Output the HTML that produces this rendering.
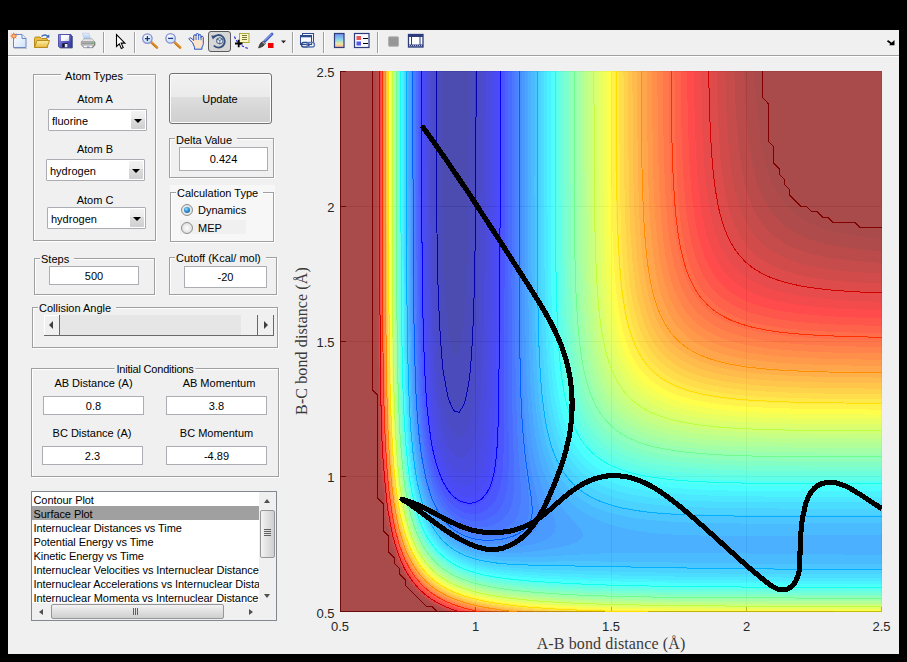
<!DOCTYPE html>
<html><head><meta charset="utf-8"><title>LEPS GUI</title>
<style>
html,body{margin:0;padding:0;background:#000;}
body{width:907px;height:662px;position:relative;overflow:hidden;font:11px "Liberation Sans",Arial,sans-serif;color:#000;}
#win{position:absolute;left:8px;top:30px;width:891px;height:624px;background:#f0f0f0;}
#tbline{position:absolute;left:8px;top:55px;width:891px;height:1px;background:#a0a0a0;}
#tbline2{position:absolute;left:8px;top:56px;width:891px;height:1px;background:#fff;}
.pn{position:absolute;box-sizing:border-box;border:1px solid #a0a0a0;box-shadow:1px 1px 0 0 #fff, inset 1px 1px 0 0 #fff;}
.t{position:absolute;white-space:nowrap;line-height:13px;height:13px;}
.tt{background:#f0f0f0;padding:0 2px;}
.c{transform:translateX(-50%);}
.ed{position:absolute;box-sizing:border-box;background:#fff;border:1px solid #abadb3;text-align:center;white-space:nowrap;}
.ed span{position:absolute;left:0;right:0;text-align:center;line-height:13px;}
.dd{position:absolute;box-sizing:border-box;background:#fff;border:1px solid #abadb3;border-radius:1px;}
.dd .v{position:absolute;left:3px;top:5px;line-height:13px;}
.dd .b{position:absolute;right:1px;top:1px;bottom:1px;width:14px;border-radius:1px;background:linear-gradient(#f2f2f2 0%,#ebebeb 44%,#dddddd 45%,#cfcfcf 100%);}
.dd .b:after{content:"";position:absolute;left:3.2px;top:8px;border:4.2px solid transparent;border-top:4.6px solid #000;border-bottom:none;}
.rd{position:absolute;width:12px;height:12px;border-radius:50%;box-sizing:border-box;border:1px solid #8e8f8f;background:radial-gradient(circle at 50% 50%,#fdfdfd 0,#ececec 45%,#cfcfcf 100%);}
.rd.on:after{content:"";position:absolute;left:2px;top:2px;width:6px;height:6px;border-radius:50%;background:radial-gradient(circle at 40% 35%,#9fe4ff 0,#2a8fd0 45%,#0c4f8c 100%);}
.sep{position:absolute;top:35px;width:1px;height:17px;background:#a0a0a0;box-shadow:1px 0 0 #fff;}
.tk{position:absolute;white-space:nowrap;line-height:15px;color:#262626;font-size:13px;}
.tk.r{right:572.5px;}
.lb{position:absolute;white-space:nowrap;font:16px "Liberation Serif","DejaVu Serif",serif;color:#3a3a3a;line-height:18px;letter-spacing:0.12px;}
.li{position:absolute;left:1px;width:227px;height:14px;line-height:14px;white-space:nowrap;overflow:hidden;padding-left:1px;box-sizing:border-box;letter-spacing:-0.07px;text-indent:-0.5px;}
</style></head><body>
<div id="win"></div>
<div id="tbline"></div><div id="tbline2"></div>
<svg id="tb" width="907" height="57" viewBox="0 0 907 57" style="position:absolute;left:0;top:0">
<defs>
<linearGradient id="gpage" x1="0" y1="0" x2="1" y2="1"><stop offset="0" stop-color="#fff"/><stop offset="1" stop-color="#cfe0fa"/></linearGradient>
<linearGradient id="gfold" x1="0" y1="0" x2="0" y2="1"><stop offset="0" stop-color="#fdf0a8"/><stop offset="1" stop-color="#e8b93c"/></linearGradient>
<linearGradient id="gcb" x1="0" y1="0" x2="0" y2="1"><stop offset="0" stop-color="#6f8df0"/><stop offset=".45" stop-color="#8fd8e8"/><stop offset=".75" stop-color="#f3e79a"/><stop offset="1" stop-color="#f0a0a0"/></linearGradient>
<linearGradient id="gsave" x1="0" y1="0" x2="1" y2=".6"><stop offset="0" stop-color="#9494f0"/><stop offset=".5" stop-color="#6060c8"/><stop offset="1" stop-color="#4040a4"/></linearGradient>
<linearGradient id="glabel" x1="0" y1="0" x2="1" y2="1"><stop offset="0" stop-color="#fff"/><stop offset=".6" stop-color="#f4f6fa"/><stop offset="1" stop-color="#c4cce0"/></linearGradient>
<linearGradient id="gpaper" x1="0" y1="0" x2="0" y2="1"><stop offset="0" stop-color="#eaf2ff"/><stop offset="1" stop-color="#9cc0f0"/></linearGradient>
<linearGradient id="gprn" x1="0" y1="0" x2="0" y2="1"><stop offset="0" stop-color="#d8d8d8"/><stop offset="1" stop-color="#9a9a9a"/></linearGradient>
<radialGradient id="glens" cx=".4" cy=".35" r=".7"><stop offset="0" stop-color="#fff"/><stop offset="1" stop-color="#b8dcf4"/></radialGradient>
</defs>
<!-- separators -->
<g stroke="#a0a0a0" stroke-width="1" shape-rendering="crispEdges">
<path d="M103.5 32V53M134.5 32V53M292.5 32V53M323.5 32V53M377.5 32V53"/>
</g>
<g stroke="#fff" stroke-width="1" shape-rendering="crispEdges">
<path d="M104.5 32V53M135.5 32V53M293.5 32V53M324.5 32V53M378.5 32V53"/>
</g>
<!-- new -->
<path d="M13.5 34.5H22l4 4V47.5H13.5z" fill="url(#gpage)" stroke="#6f86c4"/>
<path d="M22 34.5v4h4" fill="#e6eefc" stroke="#6f86c4"/>
<path d="M14 48.5H27" stroke="#9aa3b8" stroke-width="1" opacity=".6"/>
<g stroke="#e4571f" stroke-width="1"><path d="M13.800 32.700v6.600M10.500 36h6.600M11.500 33.700l4.600 4.600M16.100 33.700l-4.600 4.600"/></g>
<circle cx="13.800" cy="36" r="1.600" fill="#ffc48a" stroke="#f08030" stroke-width=".6"/>
<!-- open -->
<path d="M34.5 47.5V38.5q0-1.5 1.5-1.5h4l1.5 1.5H46q1.500 0 1.500 1.500V47.5z" fill="#e9bd46" stroke="#b98a1c"/>
<path d="M34.500 47.500l2.500-7H49.500l-2.500 7z" fill="url(#gfold)" stroke="#b98a1c"/>
<path d="M41.500 36.500q3.500-3 6.500 0" fill="none" stroke="#3a6ab8" stroke-width="1.400"/>
<path d="M49.300 34.200v3.600h-3.600z" fill="#3a6ab8"/>
<!-- save -->
<path d="M58.500 34.500H71v.5l1 1V47.500H59.500l-1-1z" fill="url(#gsave)" stroke="#3a3a98" stroke-width=".8"/>
<path d="M72.300 36v12H60" fill="none" stroke="#28406a" stroke-width=".9" opacity=".75"/>
<rect x="61" y="35" width="8.200" height="6" fill="url(#glabel)"/>
<rect x="62.200" y="43.300" width="5.800" height="3.900" fill="#16162a"/>
<rect x="64.800" y="44" width="2.700" height="3.200" fill="#e8e8f4"/>
<!-- print -->
<path d="M84.200 39.500L82.600 33.200h6.200l1.900 6.300z" fill="url(#gpaper)" stroke="#a8b8d8" stroke-width=".5"/>
<path d="M81.300 41.800l2.700-3h8.200l2.400 3z" fill="#e4e4e4" stroke="#8c8c8c" stroke-width=".5"/>
<path d="M81.300 41.800h13.300v3.200l-2.400 2.700H84l-2.700-2.700z" fill="url(#gprn)" stroke="#7a7a7a" stroke-width=".6"/>
<path d="M82.500 45.300h11l-1.800 2.200H84.300z" fill="#f6f6f6" stroke="#8a8a8a" stroke-width=".4"/>
<path d="M82 43.200h11.800" stroke="#6c6c6c" stroke-width=".7"/>
<path d="M94.900 42v3.200l-2.600 2.900" fill="none" stroke="#4a4a4a" stroke-width=".8" opacity=".7"/>
<rect x="91.800" y="42.600" width="1.200" height="1.200" fill="#38c838"/>
<rect x="87" y="46.600" width="2.400" height=".9" fill="#5a6ad8"/>
<!-- pointer -->
<path d="M116.500 34.500V46.500l2.800-2.600 2 4.600 1.900-.9-2-4.500h3.700z" fill="#fff" stroke="#000" stroke-width="1.100" stroke-linejoin="miter"/>
<!-- zoom in -->
<path d="M151 42l6 5.500" stroke="#e09028" stroke-width="2.600" stroke-linecap="round"/>
<path d="M151.500 43.500l5 4.600" stroke="#a86410" stroke-width=".8"/>
<circle cx="147.400" cy="38.600" r="4.700" fill="url(#glens)" stroke="#8a8fd0" stroke-width="1.300"/>
<path d="M144.900 38.600h5M147.400 36.100v5" stroke="#203080" stroke-width="1.300"/>
<!-- zoom out -->
<path d="M174.200 42l6 5.500" stroke="#e09028" stroke-width="2.600" stroke-linecap="round"/>
<path d="M174.700 43.500l5 4.600" stroke="#a86410" stroke-width=".8"/>
<circle cx="170.600" cy="38.400" r="4.700" fill="url(#glens)" stroke="#8a8fd0" stroke-width="1.300"/>
<path d="M168.100 38.400h5" stroke="#203080" stroke-width="1.300"/>
<!-- hand -->
<path d="M192.500 42.500l-3-2.600q-1.200-1.400.2-2 1.100-.3 2.300.9l1.700 1.600V36q0-1.300 1.200-1.300t1.200 1.300V34.800q0-1.300 1.250-1.300t1.250 1.300v1q0-1.300 1.200-1.300t1.200 1.300v1.700q0-1.200 1.150-1.200t1.150 1.200V43.500q0 2-1.300 3.500V49.200H194.500V47.200z" fill="#fbe3cc" stroke="#2454c8" stroke-width="1"/>
<path d="M196.100 36.200v3.800M198.600 35.800v4.200M201 37v3.200" stroke="#2454c8" stroke-width=".8"/>
<!-- rotate (selected) -->
<rect x="208.500" y="31.500" width="22" height="20" rx="2.500" fill="#d6d6d6" stroke="#5a5a5a"/>
<path d="M213.500 37.500A6.300 6.300 0 1 1 213.800 45.500" fill="none" stroke="#34507c" stroke-width="1.800"/>
<path d="M211.200 35.500l5 .3-3.300 3.700z" fill="#34507c"/>
<path d="M216.800 39l3-1.300 3 1.300v3.600l-3 1.400-3-1.400z" fill="#e8eef8" stroke="#34507c" stroke-width=".9"/>
<path d="M216.800 39l3 1.400 3-1.400M219.800 40.400V44" fill="none" stroke="#34507c" stroke-width=".8"/>
<!-- data cursor -->
<rect x="239.500" y="33.500" width="9.500" height="9" fill="#fbf8c4" stroke="#a8a848"/>
<path d="M241.500 35.500h5.500M241.500 37.500h5.500M241.500 39.500h5.500" stroke="#77773a" stroke-width="1" shape-rendering="crispEdges"/>
<path d="M234.500 36.500q3 9 14 12" fill="none" stroke="#1c1ce0" stroke-width="1.100" stroke-dasharray="2.500 1.500"/>
<path d="M235 43.500h7.500M238.700 39.800v7.500" stroke="#000" stroke-width="1.800"/>
<!-- brush -->
<path d="M264.500 41.500l7.500-7.500" stroke="#3c5cc8" stroke-width="2.800" stroke-linecap="round"/>
<path d="M265 40.500l6.500-6.500" stroke="#b8c8f4" stroke-width=".9" stroke-linecap="round"/>
<path d="M258.500 48q1-5 4.500-7l2.500 2.500q-2 3.500-7 4.500z" fill="#4a4a4a" stroke="#222" stroke-width=".6"/>
<path d="M262.500 41.500l2.800 2.800" stroke="#aaa" stroke-width="1.200"/>
<rect x="268" y="43" width="5.500" height="5" fill="#f00000"/>
<path d="M281 40.500h5l-2.500 2.800z" fill="#222"/>
<!-- link -->
<rect x="302.500" y="33.500" width="11" height="9" fill="#eef2fa" stroke="#2c4a8c"/>
<rect x="300.500" y="35.500" width="11" height="9" fill="#f8faff" stroke="#2c4a8c"/>
<path d="M300.500 36.500h11" stroke="#2c4a8c" stroke-width="1.600"/>
<rect x="301.500" y="42.500" width="7.500" height="4.500" rx="2.200" fill="none" stroke="#2c4a8c" stroke-width="1.400"/>
<rect x="307" y="42.500" width="7.500" height="4.500" rx="2.200" fill="none" stroke="#5a78b8" stroke-width="1.400"/>
<!-- colorbar -->
<rect x="334.500" y="33.500" width="9.500" height="14" fill="url(#gcb)" stroke="#2c3c7c" stroke-width="1.200"/>
<!-- legend -->
<rect x="354.500" y="33.500" width="14.500" height="14" fill="#fafbff" stroke="#2c3c7c" stroke-width="1.200"/>
<rect x="356.500" y="36" width="4.500" height="4" fill="#e85858"/>
<rect x="356.500" y="41.500" width="4.500" height="4" fill="#5858e8"/>
<path d="M363 38.500h4.500M363 43.500h4.500" stroke="#000" stroke-width="1" shape-rendering="crispEdges"/>
<!-- gray square -->
<rect x="388.500" y="36.800" width="10" height="9.500" rx=".8" fill="#979797" stroke="#b0b0b0" stroke-width=".9"/>
<!-- film -->
<rect x="408.500" y="34.500" width="14.500" height="12.500" fill="#fff" stroke="#2c3c7c" stroke-width="1.300"/>
<path d="M408.500 36h14.500M408.500 45.500h14.500" stroke="#2c3c7c" stroke-width="2"/>
<path d="M411.500 36v10M420 36v10" stroke="#2c3c7c" stroke-width="1"/>
<path d="M409 45.500h14" stroke="#c8d0e8" stroke-width=".8" stroke-dasharray="1 1"/>
<!-- dock arrow -->
<path d="M887.500 40.800l4.500 3.200" stroke="#000" stroke-width="1.700"/>
<path d="M894.500 40v5.200h-5.500z" fill="#000"/>
</svg>


<!-- Atom Types -->
<div class="pn" style="left:33px;top:74px;width:123px;height:167px"></div>
<div class="t tt c" style="left:94px;top:70px;padding:0 4px">Atom Types</div>
<div class="t c" style="left:95px;top:93px">Atom A</div>
<div class="dd" style="left:48px;top:109px;width:99px;height:22px"><span class="v">fluorine</span><span class="b"></span></div>
<div class="t c" style="left:95px;top:143px">Atom B</div>
<div class="dd" style="left:46px;top:159px;width:99px;height:22px"><span class="v">hydrogen</span><span class="b"></span></div>
<div class="t c" style="left:95px;top:194px">Atom C</div>
<div class="dd" style="left:47px;top:207px;width:99px;height:22px"><span class="v">hydrogen</span><span class="b"></span></div>

<!-- Update button -->
<div id="upd" style="position:absolute;left:169px;top:73px;width:103px;height:51px;box-sizing:border-box;border:1px solid #707070;border-radius:3px;background:linear-gradient(#f2f2f2 0%,#ebebeb 46%,#dddddd 48%,#cfcfcf 100%);box-shadow:inset 0 0 0 1px #fcfcfc;"></div>
<div class="t c" style="left:220px;top:93px">Update</div>

<!-- Delta Value -->
<div class="pn" style="left:169px;top:138px;width:105px;height:40px"></div>
<div class="t tt" style="left:175px;top:134px;padding:0 5px 0 1px">Delta Value</div>
<div class="ed" style="left:179px;top:147px;width:89px;height:24px"><span style="top:5px">0.424</span></div>

<!-- Calculation Type -->
<div style="position:absolute;left:170px;top:185px;width:105px;height:58px;background:#f7f7f7"></div>
<div class="pn" style="left:170px;top:192px;width:104px;height:50px"></div>
<div class="t tt" style="left:176px;top:187px;background:#f7f7f7;padding:0 5px 0 1px">Calculation Type</div>
<div style="position:absolute;left:180px;top:220px;width:66px;height:14px;background:#f0f0f0"></div>
<div class="rd on" style="left:181px;top:204px"></div>
<div class="t" style="left:198px;top:204px">Dynamics</div>
<div class="rd" style="left:181px;top:222px"></div>
<div class="t" style="left:198px;top:222px">MEP</div>

<!-- Steps -->
<div class="pn" style="left:34px;top:258px;width:121px;height:37px"></div>
<div class="t tt" style="left:40px;top:253px;padding:0 5px 0 1px">Steps</div>
<div class="ed" style="left:49px;top:266px;width:90px;height:19px"><span style="top:3px">500</span></div>

<!-- Cutoff -->
<div class="pn" style="left:169px;top:257px;width:108px;height:38px"></div>
<div class="t tt" style="left:175px;top:252px;padding:0 5px 0 1px">Cutoff (Kcal/ mol)</div>
<div class="ed" style="left:184px;top:266px;width:83px;height:22px"><span style="top:4px">-20</span></div>

<!-- Collision Angle -->
<div class="pn" style="left:32px;top:307px;width:246px;height:41px"></div>
<div class="t tt" style="left:38px;top:302px;padding:0 5px 0 1px">Collision Angle</div>
<div id="sl" style="position:absolute;left:44px;top:315px;width:230px;height:21px;background:#e6e6e6;box-sizing:border-box;border-right:1px solid #696969;border-bottom:1px solid #696969;">
 <div style="position:absolute;left:0;top:0;width:16px;height:20px;background:#f0f0f0;border-right:1px solid #696969;box-sizing:border-box;box-shadow:inset 1px 1px 0 #fff"></div>
 <div style="position:absolute;left:5px;top:6px;border:4px solid transparent;border-right:4px solid #404040;border-left:none"></div>
 <div style="position:absolute;left:197px;top:0;width:17px;height:20px;background:#f0f0f0;border-right:1px solid #696969;box-sizing:border-box"></div>
 <div style="position:absolute;left:214px;top:0;width:15px;height:20px;background:#f0f0f0;box-sizing:border-box"></div>
 <div style="position:absolute;left:220px;top:6px;border:4px solid transparent;border-left:4px solid #404040;border-right:none"></div>
</div>

<!-- Initial Conditions -->
<div class="pn" style="left:31px;top:368px;width:248px;height:109px"></div>
<div class="t tt c" style="left:155px;top:363px;letter-spacing:-0.2px">Initial Conditions</div>
<div class="t c" style="left:93.5px;top:377px">AB Distance (A)</div>
<div class="t c" style="left:219px;top:377px">AB Momentum</div>
<div class="ed" style="left:43px;top:396px;width:101px;height:19px"><span style="top:3px">0.8</span></div>
<div class="ed" style="left:166px;top:396px;width:101px;height:19px"><span style="top:3px">3.8</span></div>
<div class="t c" style="left:92px;top:427px">BC Distance (A)</div>
<div class="t c" style="left:216.5px;top:427px">BC Momentum</div>
<div class="ed" style="left:42px;top:446px;width:101px;height:19px"><span style="top:3px">2.3</span></div>
<div class="ed" style="left:166px;top:446px;width:101px;height:19px"><span style="top:3px">-4.89</span></div>

<!-- Listbox -->
<div id="lb" style="position:absolute;left:31px;top:491px;width:246px;height:130px;box-sizing:border-box;border:1px solid #828790;background:#fff;overflow:hidden">
 <div class="li" style="top:1px">Contour Plot</div>
 <div style="position:absolute;left:0;top:14px;width:228px;height:14px;background:#a0a0a0"></div>
 <div class="li" style="top:15px">Surface Plot</div>
 <div class="li" style="top:29px">Internuclear Distances vs Time</div>
 <div class="li" style="top:43px">Potential Energy vs Time</div>
 <div class="li" style="top:57px">Kinetic Energy vs Time</div>
 <div class="li" style="top:71px">Internuclear Velocities vs Internuclear Distance</div>
 <div class="li" style="top:85px">Internuclear Accelerations vs Internuclear Distance</div>
 <div class="li" style="top:99px">Internuclear Momenta vs Internuclear Distance</div>
 <!-- vertical scrollbar -->
 <div style="position:absolute;left:227px;top:0;width:17px;height:111px;background:#f0f0f0"></div>
 <div style="position:absolute;left:232px;top:7px;border:3.75px solid transparent;border-bottom:4px solid #505050;border-top:none"></div>
 <div style="position:absolute;left:232px;top:102px;border:3.75px solid transparent;border-top:4px solid #505050;border-bottom:none"></div>
 <div style="position:absolute;left:228px;top:18px;width:15px;height:48px;box-sizing:border-box;border:1px solid #979797;border-radius:2px;background:linear-gradient(90deg,#f3f3f3,#e0e0e0 50%,#cfcfcf)"></div>
 <div style="position:absolute;left:232px;top:37px;width:7px;height:1px;background:#606060;box-shadow:0 2px 0 #606060,0 4px 0 #606060,0 6px 0 #606060"></div>
 <!-- horizontal scrollbar -->
 <div style="position:absolute;left:0;top:111px;width:244px;height:17px;background:#f0f0f0"></div>
 <div style="position:absolute;left:7px;top:116.5px;border:3.5px solid transparent;border-right:4px solid #505050;border-left:none"></div>
 <div style="position:absolute;left:217px;top:116.5px;border:3.5px solid transparent;border-left:4px solid #505050;border-right:none"></div>
 <div style="position:absolute;left:19px;top:112px;width:173px;height:15px;box-sizing:border-box;border:1px solid #979797;border-radius:2px;background:linear-gradient(#f3f3f3,#e0e0e0 50%,#cfcfcf)"></div>
 <div style="position:absolute;left:101px;top:116px;width:1px;height:7px;background:#606060;box-shadow:2px 0 0 #606060,4px 0 0 #606060"></div>
</div>

<svg class="plot" width="907" height="662" viewBox="0 0 907 662" style="position:absolute;left:0;top:0">
<rect x="340" y="71" width="542" height="541" fill="#fff"/>
<g stroke="#262626" stroke-opacity="0.15" stroke-width="1" shape-rendering="crispEdges">
<path d="M475.5 71V612M611.5 71V612M746.5 71V612M881.5 71V612M340 71.5H882M340 206.5H882M340 341.5H882M340 476.5H882"/>
</g>
<g stroke="#262626" stroke-width="1" shape-rendering="crispEdges">
<path d="M340.5 71V612M340 611.5H882M340 71.5h5.5M340 206.5h5.5M340 341.5h5.5M340 476.5h5.5M475.5 612v-5.5M611.5 612v-5.5M746.5 612v-5.5M881.5 612v-5.5"/>
</g>
<g opacity="0.7" shape-rendering="crispEdges">
<rect x="340" y="71" width="542" height="541" fill="#00008f"/>
<path fill="#00009f" d="M340 612l542 0l0 -541l-413.1 0l-0.5 86.6l-0.8 64.9l-0.6 27l-0.6 21.7l-0.8 21.6l-0.8 16.2l-0.1 2.9l-0.8 8l-1.3 10.8l-1.5 10.8l-1.9 10.7l-5.4 4.2l-2.5 -9.5l-2.9 -11.8l-1.3 -15.2l-1.2 -16.3l-1 -16.2l-1 -21.6l-0.9 -26.7l-0.5 -32.9l-0.5 -59.5l-0.3 -75.7l-101.7 0z"/>
<path fill="#0000af" d="M340 612l542 0l0 -541l-406.3 0l-0.4 92l-0.7 70.3l-0.4 27l-0.6 27.1l-0.7 21.6l-0.8 21.7l-0.9 16.2l-1.1 16.2l-1.3 10.9l-1.6 10.8l-1 5.4l-1.5 7.4l-1.6 3.4l-2.8 5.4l-1.1 1.8l-5.4 -1.2l-5.4 -12.3l-2.9 -15.3l-2.5 -15.9l-1.7 -22l-1.3 -21.6l-0.9 -21.7l-0.9 -27l-0.6 -27.6l-0.6 -69.8l-0.4 -102.8l-96.6 0z"/>
<path fill="#0000bf" d="M340 612l542 0l0 -541l-401 0l-0.4 113.6l-0.4 43.3l-0.4 37.9l-0.6 32.4l-0.7 27.1l-0.8 21.6l-1 21.6l-1.2 16.9l-1.1 10.2l-1.5 10.8l-0.9 5.4l-1.9 9.4l-2.5 6.9l-2.9 6.2l-5.5 3.8l-5.4 -2.8l-5.4 -9.6l-2.4 -8.5l-3 -11.4l-0.8 -4.8l-1.5 -10.8l-1.3 -10.8l-1.8 -18.2l-1.1 -19.7l-1.1 -27.1l-0.8 -27l-0.5 -27.1l-0.5 -32.4l-0.3 -43.3l-0.4 -113.6l-92.9 0z"/>
<path fill="#0000cf" d="M340 612l542 0l0 -541l-396.3 0l-0.5 135.2l-0.4 48.7l-0.5 37.9l-0.6 32.5l-0.7 27l-0.9 21.7l-1.2 21.5l-1.5 16.3l-1.5 10.8l-0.8 5.5l-1.6 8.1l-0.8 2.7l-1.8 5.4l-2.8 6.9l-3.3 3.9l-2.1 2.1l-5.5 0.9l-5.4 -3.4l-5.4 -8.2l-2.8 -7.6l-2.6 -7.5l-2.9 -14.2l-2.5 -14.4l-1.4 -12.6l-1.3 -16.2l-1.5 -21.7l-1.3 -26l-1 -44.3l-0.4 -37.9l-0.4 -43.3l-0.4 -129.8l-89.9 0z"/>
<path fill="#0000df" d="M340 612l542 0l0 -541l-392.1 0l-0.4 129.8l-0.7 92l-0.5 37.9l-0.6 27l-0.9 27.1l-0.8 16.2l-1.2 16.2l-1.1 10.9l-0.6 5.4l-0.8 5.4l-1.4 7.7l-0.7 3.1l-1.6 5.4l-1.9 5.4l-1.2 2.9l-1.6 2.5l-3.8 5l-5.4 2.8l-5.5 -0.6l-5.4 -3.7l-5.4 -7.4l-5.4 -12.4l-2.9 -10.7l-2.6 -10.8l-1.6 -10.9l-1.4 -10.8l-1.2 -10.8l-1.1 -10.8l-1.3 -21.7l-1.1 -27l-0.8 -27.1l-0.7 -32.4l-0.4 -37.9l-0.3 -43.3l-0.4 -124.4l-87.2 0z"/>
<path fill="#0000ef" d="M340 612l542 0l0 -541l-388 0l-0.5 146.1l-0.3 54.1l-0.4 48.7l-0.5 32.4l-0.6 27.1l-0.7 21.6l-1.2 21.6l-1.4 16.3l-1.3 10.8l-0.8 4.6l-1.3 6.2l-1.5 5.4l-1.9 5.4l-0.7 1.8l-2 3.6l-3.4 4.8l-0.8 0.7l-4.6 3.2l-5.4 1l-5.5 -1.4l-5.4 -3.8l-5.4 -6.8l-5.4 -10.8l-4.4 -13.9l-1 -3.6l-0.4 -1.8l-2.1 -10.8l-1.8 -10.9l-1.2 -8l-0.8 -8.2l-1.7 -21.6l-1.4 -21.7l-1.1 -27l-0.7 -27.1l-0.6 -37.8l-0.4 -48.7l-0.3 -64.9l-0.1 -86.6l-85 0z"/>
<path fill="#0000ff" d="M340 612l542 0l0 -541l-384.2 0l-0.4 156.9l-0.3 54.1l-0.5 54.1l-0.5 37.9l-0.5 27l-0.8 21.6l-0.9 16.3l-0.9 10.8l-1.3 10.8l-0.9 5.4l-1.3 5.4l-1.5 5.4l-1.7 4.6l-3.4 6.3l-2 2.7l-2.9 2.7l-2.5 1.8l-5.4 1.9l-5.4 0l-5.5 -1.9l-5.4 -3.9l-5.4 -6.3l-5.4 -9.6l-3.4 -9.1l-2 -5.7l-2.5 -10.5l-3 -14.4l-2.2 -18.1l-2.1 -21.6l-1.2 -16.2l-1.4 -32.5l-0.8 -32.5l-0.7 -43.2l-0.4 -48.7l-0.3 -64.9l-0.1 -86.6l-82.9 0z"/>
<path fill="#0010ff" d="M340 612l542 0l0 -541l-380.5 0l-0.4 167.7l-0.8 129.8l-0.4 32.5l-0.3 21.6l-0.5 16.3l-0.9 16.2l-1.1 10.8l-0.8 5.4l-1 5.4l-1.3 5.5l-1.7 5.4l-0.5 1.3l-2.1 4.1l-3.4 5.1l-5.4 4.8l-1.8 0.9l-3.6 1.5l-5.4 0.7l-5.4 -0.7l-5.5 -2.2l-5.4 -3.9l-5.4 -5.9l-5.4 -8.7l-5.4 -13l-3.1 -11.1l-2.4 -9.6l-2.7 -17.4l-2.1 -16.3l-0.6 -5.4l-1.2 -16.2l-1.5 -27.1l-1.2 -32.4l-0.7 -32.5l-0.5 -37.8l-0.3 -37.9l-0.3 -64.9l-0.1 -92l-80.9 0z"/>
<path fill="#0020ff" d="M340 612l542 0l0 -541l-377 0l-0.2 129.8l-0.7 221.8l-0.4 27.1l-0.7 16.2l-0.4 5.4l-0.6 5.4l-0.8 5.5l-1.2 5.4l-1.5 5.4l-1.3 3.4l-0.9 2l-3.3 5.4l-1.2 1.5l-4.3 3.9l-1.2 0.9l-5.4 2.6l-5.4 1.2l-5.4 -0.1l-5.4 -1.2l-5.5 -2.3l-5.4 -3.9l-5.4 -5.6l-5.4 -7.9l-5.4 -11.7l-3.2 -9.9l-2.3 -7.9l-2.6 -13.7l-2.8 -17.1l-2 -20.8l-0.9 -10.8l-1 -16.2l-0.8 -16.3l-0.7 -16.1l-0.5 -21.7l-0.7 -43.3l-0.4 -48.7l-0.3 -70.3l-0.2 -97.4l-79.2 0z"/>
<path fill="#0030ff" d="M340 612l542 0l0 -541l-373.5 0l-0.5 270.5l0.2 48.7l0.5 64.9l-0.2 16.2l-0.5 8.1l-0.8 8.2l-0.9 5.4l-1.4 5.4l-2 5.4l-3.1 5.4l-2.6 3.2l-2.4 2.2l-3 2.1l-5.5 2.7l-2.3 0.6l-3.1 0.7l-5.4 0.4l-5.4 -0.5l-5.4 -1.5l-5.5 -2.5l-5.4 -3.8l-5.4 -5.3l-5.4 -7.5l-5.4 -10.6l-2.7 -7.2l-2.8 -8.5l-1.8 -7.8l-2.3 -10.8l-1.3 -7l-1.2 -9.2l-1.3 -10.8l-1 -10.9l-1.9 -23.7l-1.3 -30.4l-0.9 -32.4l-0.7 -43.3l-0.4 -48.7l-0.3 -70.3l-0.1 -97.4l-77.6 0z"/>
<path fill="#0040ff" d="M340 612l542 0l0 -541l-370.1 0l-0.4 216.4l0.1 64.9l0.3 27.1l0.4 27l0.5 21.7l1.4 43.2l0 10.9l-0.1 5.4l-0.4 5.4l-0.7 5.4l-1.1 5.4l-1.9 5.4l-2 3.7l-1 1.7l-4.4 4.9l-0.6 0.5l-4.8 3.2l-5.4 2.4l-5.5 1.3l-5.4 0.6l-5.4 -0.2l-5.4 -0.8l-5.4 -1.7l-5.5 -2.6l-5.4 -3.7l-4.2 -3.9l-1.2 -1.2l-5.4 -7l-5.4 -9.7l-3.7 -9.1l-1.8 -5l-2.9 -11.3l-2.5 -10.7l-1.7 -10.9l-1.5 -10.8l-1.2 -10.8l-1 -9.4l-0.9 -12.3l-0.9 -16.2l-0.7 -16.2l-1.2 -37.9l-0.8 -43.3l-0.5 -54.1l-0.3 -70.3l-0.1 -97.4l-75.9 0z"/>
<path fill="#0050ff" d="M340 612l542 0l0 -541l-366.8 0l-0.2 211l0.1 43.3l0.3 37.8l0.6 32.5l0.9 27l1.1 21.7l2.2 32.4l0.7 10.9l0.1 5.4l-0.1 5.4l-0.4 5.4l-0.9 5.4l-1.7 5.4l-3 5.4l-1.5 1.7l-3.8 3.7l-1.6 1.1l-5.4 3l-3.4 1.3l-2 0.7l-5.4 1.2l-5.5 0.6l-5.4 0l-5.4 -0.5l-5.4 -1.1l-5.4 -1.8l-5.5 -2.6l-5.4 -3.6l-4.1 -3.7l-1.3 -1.2l-5.4 -6.6l-5.4 -9l-2.1 -4.8l-3.4 -8.1l-2.4 -8.1l-3 -11.2l-1.9 -10.5l-1.7 -10.8l-1.5 -10.8l-0.6 -5.4l-1.4 -16.3l-1.1 -16.2l-0.9 -16.2l-0.7 -16.3l-1 -34.8l-0.6 -40.9l-0.4 -54.1l-0.2 -70.3l-0.2 -97.4l-74.5 0z"/>
<path fill="#0060ff" d="M340 612l542 0l0 -541l-363.5 0l-0.1 221.8l0.2 48.7l0.7 37.9l0.5 16.2l0.6 16.2l1 16.3l0.8 10.8l0.9 10.8l1.2 11.1l3.4 26.8l1.2 10.8l0.4 5.4l0 5.4l-0.6 5.4l-1.5 5.4l-3.2 5.4l-5.1 4.8l-0.8 0.6l-4.7 2.5l-5.4 2.3l-2 0.7l-3.4 0.8l-5.4 1l-5.4 0.5l-5.5 0.2l-5.4 -0.3l-5.4 -0.8l-5.4 -1.2l-5.4 -2l-5.5 -2.6l-5.4 -3.5l-3.4 -3l-2 -1.7l-5.4 -6.3l-5.4 -8.4l-4.9 -10.6l-2 -5.4l-3.3 -10.8l-1.4 -5.5l-2.1 -10.8l-2.6 -15l-1.4 -12l-1 -10.8l-0.9 -10.9l-1.1 -16.2l-1.1 -21.6l-1.1 -37.9l-0.7 -43.3l-0.4 -54.1l-0.3 -70.3l-0.1 -102.8l-73.2 0z"/>
<path fill="#0070ff" d="M340 612l542 0l0 -541l-360.2 0l-0.2 162.3l0.1 64.9l0.2 27.1l0.4 27l0.5 21.7l0.5 16.2l0.8 16.2l1.1 16.2l1.5 16.3l1.2 10.8l1.8 12.3l1.6 9.3l2.2 10.9l5 21.6l1 5.4l0.7 5.4l-0.1 5.4l-1.3 5.4l-3.4 5.4l-5.7 4.5l-1.5 1l-3.9 1.7l-5.4 2l-6.1 1.7l-4.8 0.8l-5.4 0.8l-5.4 0.4l-5.4 0.1l-5.5 -0.2l-5.4 -0.5l-5.4 -0.9l-5.4 -1.4l-5.4 -2l-5.5 -2.6l-5.4 -3.5l-5.4 -4.6l-5.4 -5.9l-5.4 -8l-5.2 -10.4l-2.1 -5.4l-3.6 -10.8l-2.5 -10.9l-2.9 -14.4l-1.7 -12.6l-1.3 -10.8l-1 -10.8l-1.3 -16.3l-1.4 -27l-1 -32.5l-0.8 -43.3l-0.5 -54.1l-0.3 -75.7l-0.1 -108.2l-71.9 0z"/>
<path fill="#0080ff" d="M340 612l542 0l0 -541l-357 0l-0.1 167.7l0.2 70.3l0.4 27.1l0.5 27l0.8 21.7l1.2 21.6l1.3 16.2l1.9 16.3l1.6 10.8l0.9 5.4l2.2 10.8l2.8 10.8l1.8 6.2l1.6 4.7l3.9 10.4l6.9 16.6l1.9 5.4l1 5.4l-0.7 5.4l-4 5.5l-5.1 3l-4.7 2.4l-6.2 1.9l-5.4 1.4l-5.4 1.2l-5.1 0.9l-5.8 0.7l-5.4 0.4l-5.4 0.3l-5.4 0.1l-5.4 -0.2l-5.5 -0.4l-5.4 -0.7l-5.4 -1.1l-5.4 -1.5l-5.4 -2l-5.5 -2.6l-5.4 -3.4l-5.4 -4.4l-5.4 -5.7l-4.8 -6.6l-0.6 -0.9l-2.5 -4.5l-3 -5.7l-2 -5.1l-3.4 -9.4l-3.1 -12.2l-2.3 -10.1l-1.8 -11.6l-1.5 -10.8l-1.2 -10.8l-1.1 -10.8l-1.1 -16.3l-0.8 -16.2l-0.7 -16.2l-0.7 -21.7l-0.9 -43.3l-0.5 -54.1l-0.3 -75.7l-0.2 -113.6l-70.5 0z"/>
<path fill="#008fff" d="M340 612l542 0l0 -541l-353.8 0l-0.1 173.1l0.2 43.3l0.4 37.9l0.5 27l1 27.1l1.3 21.6l0.9 10.8l1.1 10.8l1.4 10.9l0.8 5.4l2 10.8l1.2 5.4l1.6 6.7l2.9 9.5l2.6 7.2l1.5 3.7l3.9 8.4l5.4 9.4l5.4 7.7l5.4 6.6l10.2 11.1l0.7 1.2l3.5 4.2l1.4 5.5l-5.1 5.4l-5.2 1.9l-5.5 1.7l-6.1 1.8l-15.5 2.6l-10.9 1.5l-5.4 0.6l-5.4 0.6l-5.4 0.3l-10.9 0.4l-10.8 -0.2l-5.4 -0.3l-5.5 -0.6l-5.4 -0.9l-5.4 -1.2l-5.4 -1.6l-5.4 -2l-5.5 -2.6l-5.4 -3.3l-5.4 -4.2l-5.4 -5.5l-4 -5.3l-1.4 -1.9l-5.5 -9.6l-2 -4.7l-3.4 -8.7l-2.2 -7.5l-3.2 -12.6l-1.7 -9.1l-1.7 -10.8l-2 -15.5l-0.6 -6.1l-1.3 -16.3l-1 -16.2l-1 -21.6l-0.8 -21.7l-0.8 -37.8l-0.6 -59.5l-0.3 -75.8l-0.1 -119l-69.4 0z"/>
<path fill="#009fff" d="M340 612l542 0l0 -57.2l-81.3 -0.6l-119.2 -1.6l-21.7 -0.1l-16.3 0l-21.7 0.3l-21.6 0.7l-21.7 1.1l-32.5 1.9l-16.3 0.7l-16.3 0.2l-10.8 -0.3l-5.4 -0.4l-5.4 -0.5l-5.5 -0.7l-5.4 -1l-5.4 -1.2l-5.4 -1.6l-5.4 -2.1l-5.5 -2.5l-5.4 -3.3l-5.4 -4.1l-5.4 -5.3l-5.4 -6.8l-5.5 -9l-1.8 -4l-3.6 -8.5l-2.4 -7.7l-1.6 -5.4l-1.4 -5.2l-1.2 -5.6l-2 -10.9l-1.7 -10.8l-0.7 -5.4l-1.2 -10.8l-1.4 -16.2l-1.4 -21.7l-1.2 -26.7l-0.7 -27.4l-0.6 -32.4l-0.4 -43.3l-0.3 -48.7l-0.2 -156.9l-68.3 0zM638.4 530.8l5.1 1l5.4 0.8l5.5 0.6l10.8 1l16.3 0.8l21.6 0.6l21.7 0.2l27.1 0l130.1 -0.8l0 -464l-350.6 0l-0.1 124.4l0.1 64.9l0.4 48.7l0.7 37.9l0.6 16.2l0.7 16.3l1.1 16.2l0.9 10.8l1.2 10.8l1.5 10.9l1.9 10.8l1.1 5.4l2.7 10.8l1.8 5.9l1.7 4.9l2.1 5.4l2.5 5.4l4.5 8.5l5.4 7.8l5.4 6.3l5.5 5.2l5.4 4.4l5.4 3.7l5.4 3.2l5.4 2.7l5.5 2.4l5.4 2.1l10.8 3.4l5.4 1.4l5.5 1.2l5.4 1z"/>
<path fill="#00afff" d="M340 612l542 0l0 -47.7l-75.9 -0.3l-59.6 -0.4l-28 -0.3l-102.1 -1.7l-32.5 -0.2l-54.2 0.2l-10.8 -0.1l-10.9 -0.5l-10.8 -0.8l-5.4 -0.6l-5.5 -0.8l-5.4 -1l-5.4 -1.3l-5.4 -1.7l-6.2 -2.3l-4.7 -2.3l-5.4 -3.1l-5.4 -4.1l-5.4 -5l-5.4 -6.5l-5.5 -8.6l-3.9 -8.3l-1.5 -3.4l-2.5 -7.4l-2.9 -9.4l-2.7 -12.2l-2.7 -15.1l-2.1 -17.4l-2 -21.6l-1.3 -20.4l-1 -22.9l-0.8 -32.5l-0.6 -32.4l-0.4 -43.3l-0.3 -48.7l-0.2 -156.9l-67.2 0zM651 520l14.2 1.3l16.3 1l16.2 0.5l21.7 0.5l21.7 0.2l32.5 0.1l108.4 -0.3l0 -452.3l-347.4 0l-0.1 124.4l0.2 64.9l0.4 48.7l0.4 21.7l0.5 16.2l0.6 16.2l0.9 16.3l1.2 16.2l1.1 10.8l1.4 10.8l1.7 10.9l2.2 10.8l1.3 5.4l1.6 5.4l1.7 5.4l2 5.4l2.3 5.4l2.6 5.4l3.1 5.4l2.5 3.9l5.4 6.9l5.5 5.5l5.4 4.5l5.4 3.8l5.4 3.1l5.4 2.7l5.5 2.3l5.4 2l5.4 1.6l5.4 1.4l5.4 1.3l5.5 1.2l10.8 1.7z"/>
<path fill="#00bfff" d="M340 612l542 0l0 -42.1l-113.8 -0.4l-82.4 -0.8l-145.3 -2.9l-16.2 -0.5l-16.3 -0.8l-10.8 -1l-5.4 -0.7l-5.5 -1l-5.4 -1.1l-5.4 -1.3l-5.4 -1.6l-5.4 -2.1l-5.5 -2.5l-5.4 -3.1l-5.4 -3.9l-5.4 -4.9l-5.4 -6.3l-2.9 -4.2l-2.6 -3.9l-0.7 -1.5l-4.7 -9.5l-2.4 -6.7l-3 -8.9l-1.8 -7.3l-2.4 -10.8l-1.2 -6.4l-0.7 -4.5l-1.5 -10.8l-1.2 -10.8l-2 -21.6l-1.2 -21.7l-1 -27l-0.9 -32.5l-0.5 -32.5l-0.4 -43.2l-0.2 -48.7l-0.2 -151.5l-66.1 0zM708.6 514.6l27.1 0.5l32.5 0.2l113.8 -0.1l0 -444.2l-344.2 0l-0.1 129.8l0.3 70.4l0.3 27l0.3 21.7l0.6 21.6l0.7 16.2l0.9 16.3l1.2 16.2l1.8 16.2l1.6 10.8l2 10.9l2.6 10.8l1.5 5.4l1.9 5.4l2 5.4l2.4 5.4l2.8 5.4l1.6 2.8l1.7 2.6l3.7 5.2l5.5 6.2l5.4 4.9l5.4 4.1l5.4 3.4l5.4 2.8l5.5 2.4l5.4 2.1l5.4 1.7l5.4 1.5l5.4 1.3l5.5 1.1l5.4 1l10.8 1.6l10.9 1.3l16.2 1.2l16.3 0.9z"/>
<path fill="#00cfff" d="M340 612l542 0l0 -37.7l-113.8 -0.4l-48.8 -0.4l-43.4 -0.6l-48.7 -0.9l-54.2 -1.5l-32.6 -1l-10.8 -0.5l-10.8 -0.6l-16.3 -1.4l-10.8 -1.4l-5.5 -0.9l-5.4 -1.1l-5.4 -1.4l-5.4 -1.7l-6.9 -2.6l-4 -1.9l-5.4 -3l-5.4 -3.8l-2.5 -2.1l-2.9 -2.7l-2.6 -2.7l-2.8 -3.3l-5.3 -7.6l-3 -5.4l-2.7 -5.4l-2.1 -5.4l-3.2 -8.9l-3.3 -12.7l-2.3 -10.8l-1.8 -10.9l-1.4 -10.8l-1.3 -10.8l-1 -10.8l-1.4 -21.7l-1.3 -27l-0.9 -32.5l-0.6 -32.4l-0.5 -43.3l-0.3 -48.7l-0.2 -162.3l-65 0zM648.2 503.8l11.6 1.3l16.2 1.2l21.7 1l21.7 0.6l27.1 0.4l32.5 0.2l103 0l0 -437.5l-341 0l-0.1 113.6l0.2 64.9l0.4 43.3l0.8 37.9l0.6 16.2l0.8 16.2l1.2 16.3l1 10.8l1.2 10.8l1.6 10.8l2.1 10.8l1.2 5.5l1.4 5.4l1.6 5.4l1.8 5.4l2.2 5.4l2.4 5.4l3 5.4l3.3 5.4l5.4 6.9l5.4 5.5l5.4 4.5l5.4 3.7l5.4 3.1l5.5 2.6l5.4 2.2l5.4 1.9l5.4 1.6l5.4 1.4l5.5 1.2l10.8 2z"/>
<path fill="#00dfff" d="M340 612l542 0l0 -34.2l-81.3 -0.2l-59.6 -0.3l-48.8 -0.5l-43.4 -0.7l-37.9 -0.8l-39.2 -1.2l-36.7 -1.7l-21.7 -1.5l-10.8 -1.1l-5.4 -0.6l-5.4 -0.8l-5.5 -1.1l-5.4 -1.1l-5.4 -1.4l-5.4 -1.6l-5.4 -2.1l-5.5 -2.4l-1.4 -0.8l-4 -2.2l-5.4 -3.7l-5.4 -4.6l-5.4 -5.7l-5.5 -7.6l-5.4 -9.8l-1.8 -4.3l-3.6 -9.4l-3.4 -12.2l-2 -8.2l-0.5 -2.6l-1.9 -10.9l-1.6 -10.8l-1.4 -11.5l-1.8 -20.9l-1.3 -21.7l-1 -21.6l-0.8 -27.1l-0.6 -32.4l-0.5 -43.3l-0.2 -48.7l-0.3 -167.7l-64 0zM658.8 498.4l11.8 1.1l16.3 1l21.7 0.9l21.6 0.5l21.7 0.3l32.5 0.2l97.6 0l0 -431.4l-337.8 0l-0.1 113.6l0.2 64.9l0.5 43.3l0.4 21.6l0.5 16.3l0.7 16.2l0.9 16.2l1.3 16.3l1.1 10.8l1.5 10.8l1.8 10.8l2.3 10.8l1.4 5.5l1.7 5.4l1.9 5.4l1.9 5l2.7 5.8l2.9 5.4l3.6 5.4l1.7 2.4l2.5 3l2.9 3.2l5.4 5.1l5.4 4.1l5.4 3.4l5.5 2.8l5.4 2.4l5.4 2.1l5.4 1.8l5.4 1.5l5.5 1.3l10.8 2.1l10.8 1.6z"/>
<path fill="#00efff" d="M340 612l542 0l0 -31l-81.3 -0.2l-59.6 -0.3l-48.8 -0.4l-41.6 -0.6l-39.7 -1l-37.9 -1.3l-32.6 -1.6l-21.6 -1.4l-16.3 -1.8l-10.8 -1.6l-5.5 -0.9l-5.4 -1.2l-5.4 -1.4l-5.4 -1.7l-5.4 -2l-5.5 -2.4l-5.4 -2.9l-5.4 -3.7l-5.4 -4.4l-5.4 -5.6l-5.5 -7.2l-5.4 -9.4l-3.5 -8l-1.9 -4.8l-1.9 -6l-3 -10.8l-1.2 -5.4l-2 -10.8l-2.6 -16.3l-1.7 -16.2l-1.3 -16.2l-1.3 -21.7l-1.2 -27l-0.6 -27.1l-0.5 -32.4l-0.4 -43.3l-0.3 -48.7l-0.2 -162.3l-63.1 0zM665.9 493l15.6 1.2l16.2 0.9l16.3 0.6l21.7 0.5l27.1 0.3l27.1 0.2l92.1 0l0 -425.7l-334.6 0l0 108.2l0.2 64.9l0.4 43.3l0.5 21.6l0.4 16.3l0.7 16.2l0.9 16.2l1.3 16.3l1.2 10.8l1.4 10.8l1.9 10.8l2.3 10.8l1.4 5.4l2.2 7.2l1.3 3.7l2.2 5.4l2.5 5.4l3 5.4l1.9 3l1.7 2.4l3.7 4.8l5.4 5.7l5.4 4.6l5.4 3.8l5.5 3.2l5.4 2.6l5.7 2.4l5.1 1.8l5.4 1.6l5.5 1.4l5.4 1.3l10.8 2l10.9 1.5z"/>
<path fill="#00ffff" d="M340 612l542 0l0 -28.2l-81.3 -0.2l-59.6 -0.3l-48.8 -0.4l-43.4 -0.7l-37.9 -0.9l-37.9 -1.3l-21.7 -1l-27.1 -1.9l-16.3 -1.6l-11.1 -1.4l-10.6 -1.9l-5.4 -1.2l-5.4 -1.4l-5.4 -1.6l-5.4 -2l-5.5 -2.4l-5.4 -2.9l-5.4 -3.5l-5.4 -4.3l-5.4 -5.4l-5.5 -6.9l-2.6 -4.3l-3.2 -5.5l-5 -11.4l-3.3 -10.2l-1.6 -5.4l-1.3 -5.4l-2.2 -10.8l-2.4 -14.3l-2.1 -18.2l-1.8 -21.6l-1.6 -25.2l-0.6 -18.1l-0.8 -32.5l-0.6 -32.4l-0.4 -43.3l-0.2 -48.7l-0.2 -162.3l-62.2 0zM669.8 487.6l17.1 1.3l16.2 0.8l16.3 0.6l21.7 0.5l27.1 0.3l27.1 0.2l86.7 0l0 -420.3l-331.4 0l0 108.2l0.2 59.5l0.5 48.7l0.9 32.5l0.7 16.2l0.9 16.2l1.3 16.2l1.1 10.9l1.5 10.8l1.8 10.8l2.3 10.8l1.5 5.4l1.6 5.4l2.7 7.7l1.4 3.2l2.5 5.4l3 5.4l4 6.1l3.8 4.7l1.6 1.9l5.4 5.2l5.4 4.2l5.5 3.5l2.6 1.4l2.8 1.5l5.4 2.5l5.4 2.1l5.4 1.8l5.5 1.5l10.8 2.5l10.8 1.9l10.9 1.5z"/>
<path fill="#10ffef" d="M340 612l542 0l0 -25.7l-140.9 -0.4l-48.8 -0.4l-43.3 -0.6l-38 -0.9l-32.5 -1.2l-27.1 -1.4l-27.1 -1.8l-16.3 -1.8l-10.8 -1.4l-5.4 -0.9l-5.5 -1l-5.4 -1.2l-5.4 -1.5l-5.4 -1.6l-5.4 -1.9l-5.5 -2.4l-5.4 -2.8l-5.4 -3.5l-2.3 -1.7l-3.1 -2.5l-5.4 -5.3l-5.5 -6.6l-5.4 -8.6l-2 -4.1l-3.4 -7.4l-3 -8.8l-2.4 -7.7l-3.2 -13.9l-2.2 -12l-1.3 -9.7l-1.3 -10.8l-2 -21.6l-0.9 -11.8l-0.5 -9.9l-1 -27l-0.9 -32.5l-0.5 -32.4l-0.4 -43.3l-0.2 -48.7l-0.3 -162.3l-61.2 0zM671.2 482.2l15.7 1.2l16.2 0.9l16.3 0.7l21.7 0.5l27.1 0.4l27.1 0.2l86.7 0.1l0 -415.2l-328.2 0l0 108.2l0.3 59.5l0.5 43.3l0.5 21.6l0.5 16.3l0.8 16.2l0.6 10.8l1.3 16.2l1.2 10.9l1.4 10.8l1.8 10.8l2.4 10.8l1.4 5.4l1.6 5.4l1.9 5.4l2.1 5.5l2.5 5.4l3.9 6.8l2.6 4l2.8 3.7l5.4 5.9l5.4 4.8l5.5 3.9l5.4 3.3l5.4 2.7l6.6 2.7l4.2 1.6l5.5 1.7l5.4 1.4l5.4 1.3l10.8 2l10.9 1.6z"/>
<path fill="#20ffdf" d="M340 612l542 0l0 -23.4l-140.9 -0.4l-48.8 -0.4l-43.4 -0.6l-37.9 -0.9l-37.9 -1.3l-21.7 -1.2l-21.7 -1.6l-10.8 -1l-10.9 -1.1l-10.8 -1.6l-10.9 -1.9l-5.4 -1.2l-5.4 -1.4l-5.4 -1.7l-5.4 -1.9l-5.5 -2.3l-5.4 -2.8l-3.2 -2l-2.2 -1.4l-5.4 -4l-5.7 -5.4l-5.2 -6.2l-3.1 -4.6l-2.3 -3.6l-0.9 -1.8l-4.5 -9.2l-2.6 -7.1l-2.8 -8.4l-3.3 -13.2l-2.2 -10.8l-1.6 -10.9l-1.4 -10.8l-1.1 -10.8l-1.3 -13.4l-1.4 -24.5l-1.1 -27l-0.8 -32.5l-0.5 -32.4l-0.4 -43.3l-0.2 -48.7l-0.3 -162.3l-60.3 0zM671.2 476.7l15.7 1.4l16.2 1l16.3 0.7l21.7 0.6l27.1 0.4l27.1 0.2l86.7 0.1l0 -410.1l-324.9 0l0 102.8l0.2 59.5l0.6 43.3l0.5 21.6l0.5 16.2l0.7 16.3l0.7 10.8l1.3 16.2l1.1 10.8l1.4 10.9l1.8 10.8l1.7 8.2l2.1 8l1.6 5.4l1.8 5.3l2.2 5.5l2.4 5.5l3 5.4l3.4 5.4l5.2 6.5l5.4 5.5l5.5 4.4l5.4 3.6l5.4 3l5.4 2.6l3.7 1.4l7.2 2.6l5.4 1.6l5.4 1.3l10.8 2.3l10.9 1.7z"/>
<path fill="#30ffcf" d="M340 612l542 0l0 -21.2l-146.3 -0.4l-38 -0.3l-37.9 -0.5l-38 -0.8l-32.5 -1l-27.1 -1.3l-27.1 -1.6l-21.7 -2.2l-16.2 -2.1l-5.4 -0.9l-5.5 -1.1l-10.8 -2.6l-5.4 -1.6l-5.4 -2l-5.5 -2.3l-5.4 -2.7l-5.4 -3.3l-5.4 -4l-5.4 -4.9l-2.5 -2.7l-3 -3.5l-5 -7.3l-3 -5.4l-2.8 -5.7l-4 -10.6l-1.8 -5.4l-1.5 -5.4l-2.6 -10.8l-0.9 -4.5l-1.1 -6.3l-1.6 -10.9l-1.4 -10.8l-1.4 -12.4l-0.7 -9.2l-1.3 -21.7l-1.2 -27l-0.9 -32.5l-0.6 -32.4l-0.4 -43.3l-0.3 -54.1l-0.2 -162.3l-59.4 0zM670.3 471.3l16.6 1.6l16.2 1.1l16.3 0.7l21.7 0.7l27.1 0.4l27.1 0.3l86.7 0.1l0 -405.2l-321.7 0l0.1 97.4l0.2 59.5l0.5 43.3l0.5 21.6l0.6 16.2l0.7 16.3l0.7 10.8l1.2 16.2l1.2 10.8l1.4 10.9l1.8 10.8l2.3 10.8l1.3 5.4l1.6 5.4l1.9 5.4l2.2 5.7l2.4 5.1l2.8 5.5l3.5 5.4l2.1 2.9l2 2.5l3.4 3.8l5.5 5l5.4 4.1l5.4 3.4l5.4 2.8l5.8 2.5l5.1 1.9l5.4 1.8l6.5 1.7l9.7 2.2l10.9 1.9z"/>
<path fill="#40ffbf" d="M340 612l542 0l0 -19.3l-97.6 -0.1l-65 -0.3l-54.2 -0.6l-43.4 -0.8l-20.7 -0.5l-11.8 -0.5l-32.5 -1.6l-27.1 -2l-14.8 -1.4l-6.9 -0.8l-10.8 -1.6l-5.4 -0.9l-10.2 -2.1l-6.1 -1.6l-5.4 -1.6l-6.2 -2.2l-4.7 -2l-5.4 -2.6l-5.4 -3.3l-5.4 -3.9l-5.1 -4.4l-5 -5.4l-4 -5.4l-2.2 -3.2l-5.4 -10.1l-3.4 -8.4l-2 -5.3l-1.6 -5.5l-1.5 -5.4l-2.3 -9.7l-1.2 -6.5l-1.8 -10.8l-1.5 -10.9l-1 -7.8l-1.6 -19.2l-1.3 -21.7l-1.2 -27l-0.8 -27.1l-0.6 -32.4l-0.4 -43.3l-0.2 -48.7l-0.3 -173.1l-58.6 0zM816.2 471.3l65.8 0.1l0 -400.4l-318.3 0l0 113.6l0.5 64.9l0.5 27.1l0.6 21.6l0.9 21.7l1 16.2l1.4 16.2l2 16.2l1.8 10.9l2.3 10.8l1.4 5.4l1.5 5.4l1.8 5.4l2.1 5.4l2.4 5.4l2.9 5.4l2.5 4.2l5.4 7.3l5.5 5.8l5.4 4.6l5.4 3.8l5.4 3.1l5.4 2.7l2.5 1l3 1.2l5.4 1.9l5.4 1.7l5.4 1.4l10.9 2.3l10.8 1.8l5.4 0.7l10.9 1.2l16.2 1.3l16.3 0.9l21.7 0.8l21.6 0.5l27.1 0.3z"/>
<path fill="#50ffaf" d="M340 612l542 0l0 -17.4l-97.6 -0.1l-65 -0.3l-48.8 -0.5l-43.3 -0.8l-38 -1.1l-31.3 -1.4l-12 -0.9l-16.3 -1.3l-10.8 -1l-10.9 -1.3l-10.8 -1.5l-10.9 -2l-5.4 -1.2l-5.4 -1.4l-5.4 -1.6l-5.4 -1.9l-5.5 -2.2l-5.4 -2.7l-4.7 -2.7l-6.1 -4.2l-5.4 -4.7l-5.5 -5.8l-5.4 -7.4l-2.8 -4.9l-2.9 -5.4l-2.3 -5.5l-2.8 -7l-2.8 -9.2l-1.5 -5.4l-1.1 -4.6l-1.3 -6.2l-1.9 -10.8l-1.6 -10.9l-1.3 -10.8l-1.9 -21.6l-1.3 -21.7l-1.2 -27l-0.8 -27.1l-0.5 -32.4l-0.4 -43.3l-0.2 -48.7l-0.2 -173.1l-57.9 0zM755 465.9l24 0.4l27.1 0.2l75.9 0.2l0 -395.7l-315 0l0.1 102.8l0.4 64.9l0.3 21.6l0.5 21.7l0.7 21.6l0.9 16.3l1.1 16.2l1.5 16.2l1.4 10.8l1.8 10.9l2.2 10.8l1.4 5.4l1.5 5.4l1.8 5.4l1.3 3.6l3.1 7.2l2.8 5.4l3.3 5.4l1.6 2.4l2.4 3.1l3.1 3.5l5.4 5.3l5.4 4.3l5.4 3.5l5.4 2.9l5.5 2.5l5.4 2.2l5.4 1.8l5.4 1.5l5.4 1.4l10.9 2.2l10.8 1.7l10.9 1.3l16.2 1.4l16.3 1l21.7 0.9z"/>
<path fill="#60ff9f" d="M340 612l542 0l0 -15.6l-92.1 -0.1l-65.1 -0.2l-43.3 -0.4l-43.4 -0.7l-37.9 -1l-21.7 -0.9l-16.3 -0.8l-16.2 -1l-13.5 -0.9l-19.1 -2l-16.2 -2.2l-5.4 -0.9l-5.5 -1.1l-10.8 -2.6l-5.4 -1.6l-5.4 -1.9l-5.5 -2.2l-5.4 -2.5l-5.4 -3.2l-2.3 -1.5l-3.1 -2.2l-5.4 -4.5l-5.5 -5.7l-5.4 -7.2l-1.3 -2l-4.1 -7.2l-1.7 -3.6l-2.3 -5.5l-2.1 -5.4l-1.7 -5.4l-3 -10.7l-1.2 -5.5l-2.1 -10.8l-2.2 -13.4l-2 -19.1l-1.4 -16.2l-1.4 -21.7l-0.9 -21.6l-0.8 -32.5l-0.6 -32.4l-0.4 -43.3l-0.2 -48.7l-0.2 -173.1l-57.1 0zM733 460.5l24.3 0.7l32.6 0.5l37.9 0.2l54.2 0.1l0 -391l-311.6 0l0 97.4l0.4 59.5l0.7 43.3l0.7 21.6l0.7 16.2l1 16.3l0.9 10.8l1.7 16.2l1.5 10.8l2 10.9l2.5 10.8l1.5 5.4l1.8 5.4l2 5.4l2.3 5.4l2.8 5.4l3.2 5.4l4.1 5.7l5.4 6.1l5.4 4.8l5.4 4l5.4 3.3l5.5 2.8l5.4 2.3l5.4 2l5.4 1.7l5.4 1.5l5.5 1.3l5.4 1.1l10.8 1.8l10.9 1.5l16.2 1.5l16.3 1.1z"/>
<path fill="#70ff8f" d="M340 612l542 0l0 -13.9l-97.6 -0.2l-65 -0.3l-48.8 -0.4l-43.3 -0.7l-28.3 -0.7l-31.4 -1.4l-27.1 -1.8l-10.8 -0.8l-14.6 -1.4l-12.5 -1.7l-10.8 -1.8l-5.5 -1l-5.4 -1.2l-5.4 -1.4l-5.4 -1.6l-6.4 -2.2l-4.5 -1.8l-5.4 -2.5l-5.4 -3.1l-5.1 -3.4l-5.7 -4.7l-5.5 -5.4l-5.4 -7l-2.8 -4.5l-3.1 -5.4l-4.9 -10.9l-1.8 -5.4l-3.4 -10.8l-2.4 -10.8l-2.1 -10.8l-1.2 -6.6l-1.2 -9.7l-1.2 -10.8l-1.9 -21.6l-1.1 -16.6l-1.1 -26.7l-0.8 -32.5l-0.6 -37.8l-0.4 -43.3l-0.2 -48.7l-0.2 -167.7l-56.3 0zM720 455.1l26.5 1.1l32.5 0.6l43.4 0.4l59.6 0.1l0 -386.3l-308.2 0l0 92l0.4 59.5l0.7 43.3l0.7 21.6l0.7 16.2l1 16.3l1.2 14.5l1.4 12.5l1.5 10.8l1.9 10.8l1.1 5.5l1.4 5.4l1.5 5.4l1.7 5.4l2 5.4l2.3 5.4l1.4 3.1l1.2 2.3l3.2 5.4l3.8 5.4l2.7 3.3l1.9 2.1l3.5 3.5l2.2 2l3.2 2.5l4.1 2.9l6.8 3.9l5.4 2.6l5.4 2.2l5.4 1.9l5.4 1.7l5.5 1.4l5.4 1.2l6.8 1.3l9.4 1.5l5.5 0.7l10.8 1.2l10.8 1z"/>
<path fill="#80ff80" d="M340 612l542 0l0 -12.3l-97.6 -0.2l-65 -0.2l-48.8 -0.5l-43.3 -0.7l-32.6 -0.9l-33.2 -1.4l-26.4 -1.9l-10.8 -1l-10.9 -1.2l-10.8 -1.3l-5.4 -0.9l-10.9 -2l-5.4 -1.2l-5.4 -1.3l-5.4 -1.6l-5.4 -1.9l-5.3 -2l-5.6 -2.6l-5.2 -2.8l-5.6 -3.7l-5.4 -4.4l-5.5 -5.3l-5.4 -6.7l-5.4 -8.6l-1.9 -3.7l-3.5 -7.8l-3 -8.5l-2.4 -7.7l-3.3 -13.9l-2.1 -10.8l-0.8 -5.4l-1.4 -10.9l-1.2 -10.8l-1.9 -21.6l-1.2 -21.7l-1 -27l-0.8 -32.5l-0.5 -32.4l-0.4 -43.3l-0.2 -48.7l-0.2 -167.7l-55.5 0zM711.4 449.7l13.4 0.8l16.3 0.7l32.5 0.8l43.4 0.5l65 0.2l0 -381.7l-304.8 0l0.1 86.6l0.4 59.5l0.7 43.2l0.4 16.3l0.7 16.2l0.9 16.2l0.7 10.9l1.5 16.2l1.3 10.8l1.7 10.8l2.2 10.8l1.5 6.5l1.2 4.4l1.7 5.4l2.5 6.9l1.7 3.9l2.7 5.4l3.1 5.4l3.6 5.4l5.2 6.2l4.9 4.6l5.9 4.7l5.5 3.5l5.4 2.9l5.4 2.4l5.4 2.1l5.4 1.8l5.5 1.6l5.4 1.3l10.8 2.2l10.9 1.7l16.2 1.8z"/>
<path fill="#8fff70" d="M340 612l542 0l0 -10.7l-88.2 -0.1l-63.6 -0.3l-48.7 -0.3l-43.4 -0.7l-37.9 -1l-32.6 -1.3l-16.2 -0.9l-13.4 -0.9l-19.1 -1.9l-16.3 -2l-10.8 -1.7l-10.9 -2.3l-5.4 -1.4l-5.4 -1.5l-5.4 -1.8l-5.5 -2.1l-5.4 -2.5l-5.4 -2.9l-2.5 -1.6l-2.9 -1.9l-5.4 -4.2l-5.5 -5.2l-5.4 -6.6l-2.5 -3.7l-3.4 -5.4l-4.9 -10.2l-2.3 -6.1l-3.1 -9.3l-1.8 -6.9l-2.5 -10.8l-1.2 -5.8l-0.8 -5l-1.5 -10.8l-1.3 -10.9l-1.8 -18.2l-1.5 -25l-1.1 -27.1l-0.9 -32.5l-0.5 -32.4l-0.4 -43.3l-0.2 -48.7l-0.3 -173.1l-54.7 0zM705.4 444.3l14 1l16.3 0.9l16.2 0.6l16.3 0.4l43.3 0.6l70.5 0.2l0 -377l-301.3 0l0.1 86.6l0.4 59.5l0.3 21.6l0.5 21.6l0.5 16.3l0.7 16.2l0.7 12.1l1.1 15l1.1 10.8l1.3 10.8l1.6 10.8l2.2 10.8l2.7 10.9l1.6 5.4l1.9 5.4l2.2 5.4l2.6 5.4l3.4 6l3.3 4.8l2.1 2.8l2.3 2.6l3.1 3.4l5.4 4.7l5.5 4l5.4 3.2l5.4 2.8l5.4 2.3l5.4 2l5.5 1.7l5.4 1.5l5.4 1.2l5.4 1.2l10.9 1.8l10.8 1.4z"/>
<path fill="#9fff60" d="M340 612l542 0l0 -9.3l-92.1 -0.1l-65.1 -0.3l-48.8 -0.3l-43.3 -0.7l-32.5 -0.8l-27.1 -1.1l-27.1 -1.6l-10.9 -0.8l-13.8 -1.2l-7.9 -0.9l-10.8 -1.5l-10.8 -1.7l-5.5 -1l-5.4 -1.2l-5.4 -1.4l-5.4 -1.6l-5.4 -1.7l-5.5 -2.1l-5.4 -2.4l-5.4 -2.9l-5.3 -3.3l-5.5 -4.3l-5.5 -5.1l-1.3 -1.4l-4.5 -5.4l-5 -7.5l-1.8 -3.3l-3.6 -7.3l-3.5 -9l-1.9 -5.6l-1.5 -5.2l-2.6 -10.8l-1.4 -6.1l-0.8 -4.7l-1.6 -10.8l-1.5 -10.9l-1.5 -13.8l-0.6 -7.8l-1.4 -21.6l-1.2 -27.1l-0.9 -32.4l-0.7 -37.9l-0.3 -37.9l-0.3 -48.7l-0.2 -178.5l-54 0zM701.3 438.9l12.7 1.1l16.2 1l16.3 0.8l16.3 0.5l21.6 0.4l27.1 0.3l70.5 0.3l0 -372.3l-297.7 0l0.1 86.6l0.4 54.1l0.3 21.6l0.5 21.6l0.5 16.3l0.7 16.2l0.9 16.2l0.8 10.8l1.1 10.9l1.3 10.8l1.6 10.8l2.1 10.8l1.2 5.4l1.5 5.4l1.6 5.5l1.8 5.4l2.2 5.4l2.5 5.4l3 5.4l3.6 5.4l4.4 5.7l5.4 5.5l5.5 4.5l5.4 3.6l5.4 3.1l5.4 2.6l5.4 2.2l5.5 1.9l5.4 1.6l7 1.8l9.2 1.9l10.9 1.7z"/>
<path fill="#afff50" d="M340 612l542 0l0 -7.9l-92.1 -0.2l-65.1 -0.2l-48.8 -0.4l-43.3 -0.6l-32.5 -0.8l-27.1 -1l-27.1 -1.6l-16.3 -1.3l-10.8 -1.1l-10.2 -1.1l-6.1 -0.9l-10.8 -1.8l-5.5 -1l-5.4 -1.2l-5.4 -1.3l-5.4 -1.6l-5.4 -1.7l-3.8 -1.4l-7.1 -3l-4.6 -2.4l-6.2 -3.8l-5.4 -4.1l-3.3 -2.9l-2.2 -2l-3 -3.4l-2.4 -2.8l-5.4 -7.7l-3.1 -5.7l-2.3 -4.6l-2.6 -6.2l-2.8 -7.8l-1 -3.1l-1.4 -5.4l-2.7 -10.8l-2 -10.8l-1.7 -10.8l-1.4 -10.9l-0.7 -5.4l-1.4 -16.2l-1.4 -21.6l-1.2 -27.1l-0.8 -27l-0.6 -32.5l-0.4 -43.3l-0.3 -54.1l-0.2 -178.5l-53.3 0zM698.5 433.5l10.1 1l16.2 1.3l16.3 0.9l21.7 0.8l21.6 0.5l27.1 0.3l70.5 0.3l0 -367.6l-294.1 0l0.1 81.1l0.4 54.1l0.7 43.3l0.5 16.3l0.7 16.2l1 16.2l0.8 10.8l1 10.9l1.6 13.4l1.3 8.2l2.1 10.8l2.1 8.9l2.1 7.3l1.8 5.5l1.5 3.7l3.2 7.1l2.8 5.4l3.5 5.4l1.3 1.8l2.9 3.6l2.5 2.9l2.6 2.5l2.9 2.6l5.4 4.2l5.4 3.5l5.4 2.9l7 3l3.9 1.5l5.4 1.8l7.8 2.2l8.4 1.9l10.9 1.9z"/>
<path fill="#bfff40" d="M340 612l542 0l0 -6.6l-92.1 -0.1l-65.1 -0.2l-48.8 -0.4l-43.3 -0.6l-38 -1l-32.5 -1.4l-9.6 -0.5l-12.1 -0.9l-21.6 -2l-10.9 -1.3l-9.2 -1.2l-12.5 -2.3l-5.4 -1.2l-8 -1.9l-8.2 -2.6l-5.5 -2l-5.4 -2.4l-5.4 -2.8l-5.4 -3.3l-5.4 -3.9l-5.3 -4.7l-4.9 -5.4l-4.1 -5.4l-2 -3l-1.4 -2.4l-4 -7.4l-3.7 -8.8l-1.7 -4.6l-3.4 -11.7l-1.4 -5.4l-1.2 -5.4l-2 -10.8l-1.7 -10.8l-1.2 -8.9l-0.7 -7.4l-1.8 -21.6l-1.3 -21.6l-1.1 -27.1l-0.6 -21.6l-0.6 -37.9l-0.4 -43.3l-0.3 -54.1l-0.2 -173.1l-52.6 0zM802.6 433.5l36 0.3l43.4 0.1l0 -362.9l-290.5 0l0.2 92l0.3 32.4l0.3 27.1l0.5 21.6l0.7 21.7l0.7 16.2l1.1 16.2l1.4 16.2l2 16.3l1.8 10.8l2.3 10.8l2.8 10.3l2 5.9l2.1 5.5l1.3 3l1.1 2.4l2.9 5.4l3.4 5.4l3.4 4.7l5.5 6l5.4 4.8l5.4 3.9l5.4 3.3l5.4 2.7l3.7 1.6l7.2 2.8l5.4 1.7l5.4 1.5l10.9 2.4l10.8 1.8l10.8 1.4l16.3 1.6l16.3 1.1l21.6 1l21.7 0.6z"/>
<path fill="#cfff30" d="M340 612l542 0l0 -5.2l-151.8 -0.3l-48.7 -0.4l-43.4 -0.6l-32.5 -0.7l-32.5 -1.3l-27.1 -1.5l-12 -0.8l-9.7 -1l-16.3 -1.8l-10.8 -1.6l-6.6 -1l-9.7 -2.1l-5.4 -1.3l-5.4 -1.4l-5.4 -1.8l-5.5 -2l-5.4 -2.2l-5.4 -2.8l-5.4 -3.2l-5.4 -3.9l-5.5 -4.8l-5.4 -5.8l-5.4 -7.4l-2.7 -4.6l-3 -5.4l-2.3 -5.4l-2.8 -7l-2.9 -9.3l-1.5 -5.4l-1.4 -5.4l-2.1 -10.8l-1.9 -10.8l-1.1 -7.7l-2 -19.4l-1.3 -16.2l-1.3 -21.6l-0.9 -21.7l-0.8 -32.4l-0.5 -32.5l-0.4 -43.3l-0.2 -54.1l-0.2 -173.1l-52 0zM772.5 428.1l22.8 0.5l21.7 0.2l65 0.4l0 -358.2l-286.8 0l0.2 86.6l0.6 54.1l0.4 21.6l0.6 21.6l0.7 16.3l0.9 16.2l1.3 16.2l1.1 10.8l1.4 10.9l0.8 5.4l2 10.8l1.2 5.4l1.4 5.4l1.5 5.4l1.7 5.2l2.2 5.6l3.2 7.2l2 3.7l3.3 5.4l4 5.4l1.6 1.9l3.2 3.5l2.2 2.1l3.9 3.3l1.5 1.2l5.4 3.7l5.4 3.1l5.9 2.8l5 2l5.4 1.9l5.4 1.7l5.4 1.4l10.9 2.3l10.8 1.8l10.9 1.4l10.8 1l16.3 1.2l16.2 0.9z"/>
<path fill="#dfff20" d="M340 612l542 0l0 -4l-97.6 -0.1l-65 -0.3l-48.8 -0.3l-43.3 -0.6l-32.6 -1l-27.1 -1.1l-27.1 -1.7l-20.5 -1.7l-17.4 -2.2l-10.8 -1.7l-5.5 -1l-5.4 -1.2l-5.4 -1.3l-5.4 -1.5l-6.3 -1.9l-4.6 -1.7l-5.4 -2.3l-5.4 -2.7l-5.4 -3.2l-5.4 -3.8l-3.1 -2.6l-2.4 -2.1l-5.4 -5.7l-2.4 -3l-3 -4.1l-0.8 -1.3l-4.6 -7.9l-1.4 -2.9l-2.4 -5.4l-2.1 -5.4l-1.8 -5.5l-3.1 -10.8l-1.2 -5.4l-2.2 -10.8l-2.1 -12.5l-1.1 -9.1l-1.1 -10.9l-1.8 -21.6l-1.4 -22.6l-0.8 -20.7l-0.8 -32.4l-0.5 -37.9l-0.4 -43.3l-0.2 -48.7l-0.2 -173.1l-51.3 0zM758.2 422.6l20.8 0.7l27.1 0.6l32.5 0.3l43.4 0.2l0 -353.4l-283 0l0.2 81.1l0.5 54.1l0.4 21.7l0.7 21.6l0.7 16.3l0.9 16.2l1.2 16.2l1.8 16.2l1.5 10.9l2 10.8l2.1 9.2l2 7l1.7 5.4l1.7 4.6l2.7 6.2l2.7 5.5l3.3 5.4l2.2 3.1l1.7 2.3l3.7 4.2l5.4 5.3l5.4 4.2l5.4 3.5l5.5 3l3 1.4l2.4 1.1l5.4 2.1l6.8 2.2l9.5 2.5l10.8 2.3l10.8 1.7l10.9 1.3l16.2 1.5l10.9 0.7z"/>
<path fill="#efff10" d="M340 612l542 0l0 -2.8l-157.2 -0.3l-48.8 -0.4l-43.3 -0.6l-32.5 -0.7l-27.1 -1l-27.1 -1.6l-21.7 -1.8l-16.3 -1.7l-10.8 -1.7l-10.9 -1.9l-5.4 -1.1l-5.4 -1.2l-10.8 -3.2l-4.7 -1.6l-6.2 -2.6l-5.4 -2.6l-5.4 -3.2l-5.4 -3.7l-5.1 -4.2l-5.8 -5.9l-5.4 -7l-5.4 -8.9l-2.5 -5.2l-2.9 -6.7l-3.3 -9.6l-2.2 -7.3l-3.1 -14.3l-2 -10.8l-0.8 -5.4l-1.4 -10.8l-1.1 -10.9l-1.8 -21.6l-0.6 -8.9l-0.6 -12.7l-1 -27.1l-0.7 -32.5l-0.5 -32.4l-0.3 -43.3l-0.3 -48.7l-0.2 -173.1l-50.6 0zM750.3 417.2l23.3 1l27.1 0.6l32.5 0.5l48.8 0.2l0 -348.5l-279.1 0l0.2 75.7l0.5 54.1l0.4 21.7l0.6 21.6l0.7 16.2l0.9 16.3l1.3 16.2l1.1 10.8l1.3 10.8l1.7 10.9l2.3 10.8l2.5 9.9l2 6.3l2 5.4l1.4 3.4l3.7 7.4l3.2 5.5l4 5.6l4.5 5.2l5.7 5.4l6 4.5l5.5 3.3l5.7 3l5.1 2.2l5.4 2.1l5.4 1.7l5.5 1.5l5.4 1.3l10.8 2.2l10.9 1.6l10.8 1.3l16.3 1.4z"/>
<path fill="#ffff00" d="M340 612l542 0l0 -1.6l-103 -0.2l-65 -0.2l-48.8 -0.4l-43.4 -0.7l-27.1 -0.7l-27.1 -1.1l-16.2 -0.9l-21.7 -1.7l-10.8 -1l-10.9 -1.2l-8.1 -1.1l-8.1 -1.4l-10.9 -2.1l-5.4 -1.3l-5.4 -1.4l-5.4 -1.7l-5.5 -1.9l-5.4 -2.2l-5.4 -2.6l-5.4 -3.1l-5.4 -3.7l-5.5 -4.4l-5.4 -5.5l-5.4 -6.7l-3.4 -5.3l-2 -3.4l-1 -2l-2.6 -5.4l-2.3 -5.4l-2 -5.4l-3 -9.4l-2.9 -12.3l-2.1 -10.8l-0.9 -5.4l-1.5 -10.8l-1.2 -10.9l-1.1 -10.8l-1.1 -13.8l-1.3 -24l-0.9 -27.1l-0.8 -32.5l-0.5 -32.4l-0.3 -43.3l-0.2 -48.7l-0.2 -173.1l-50 0zM745.8 411.8l22.4 1.1l32.5 1l32.5 0.4l48.8 0.3l0 -343.6l-275.2 0l0.3 75.7l0.5 54.1l0.5 21.7l0.5 16.2l0.6 16.2l0.9 16.3l0.9 12.1l1.5 14.9l1.3 10.8l1.7 10.9l1 5.4l2.5 10.8l2.8 9.7l2.4 6.5l3.1 7.1l1.9 3.7l3.1 5.4l3.8 5.5l2 2.4l2.6 3l2.8 2.8l5.4 4.7l5.5 3.8l5.4 3.2l3.3 1.7l7.5 3.3l6 2.1l4.9 1.5l5.4 1.4l10.8 2.4l10.9 1.8l10.8 1.4l10.8 1.1z"/>
<path fill="#ffef00" d="M340 612l542 0l0 -0.4l-151.8 -0.3l-48.7 -0.4l-38 -0.4l-32.5 -0.7l-27.1 -0.9l-27.1 -1.2l-21.7 -1.4l-10.8 -1l-10.9 -1.2l-10.8 -1.4l-10.3 -1.5l-6 -1.2l-10.8 -2.4l-5.4 -1.3l-5.4 -1.7l-5.5 -1.9l-5.4 -2.2l-5.4 -2.6l-5.4 -2.9l-5.4 -3.7l-2.3 -1.8l-3.2 -2.6l-5.4 -5.3l-5.4 -6.6l-5.4 -8.4l-2.1 -4.1l-3.3 -7l-3.4 -9.2l-2.1 -6.2l-2.5 -10.1l-1.2 -5.4l-2.1 -10.8l-1.6 -10.8l-1.4 -10.8l-1.1 -10.9l-1 -10.8l-1.3 -21.6l-1.2 -27.1l-0.9 -32.4l-0.6 -37.9l-0.3 -43.3l-0.3 -54.1l-0.2 -173.1l-49.3 0zM743.8 406.4l13.5 0.9l10.9 0.5l27.1 0.9l37.9 0.6l48.8 0.3l0 -338.6l-271.1 0l0.2 75.7l0.5 48.7l0.5 21.7l0.5 16.2l0.6 16.2l0.9 16.3l1.3 16.2l1 10.8l1.4 10.8l1.7 10.8l2.1 10.9l1.3 5.4l1.5 5.4l1.7 5.4l2 5.4l2.3 5.4l2.3 4.8l3.4 6l2 3l1.8 2.4l3.6 4.5l5.4 5.5l5.5 4.4l5.4 3.7l5.4 3l5.4 2.6l5.4 2.2l5.5 1.9l5.4 1.6l5.4 1.4l5.4 1.2l10.9 2l10.8 1.6l10.8 1.2z"/>
<path fill="#ffdf00" d="M340 612l329.9 0l-37.2 -0.6l-32.5 -0.8l-27.1 -1l-21.7 -1.1l-21.7 -1.5l-10.8 -1.1l-16.3 -2l-10.8 -1.7l-6 -1l-10.3 -2.3l-5.4 -1.5l-5.8 -1.6l-5.1 -1.8l-5.4 -2.2l-5.4 -2.5l-5.4 -3l-5.4 -3.6l-4.2 -3.2l-1.3 -1l-5.4 -5.2l-5.4 -6.5l-2.4 -3.5l-3.5 -5.4l-4.9 -10l-2.5 -6.2l-1.9 -5.4l-1.1 -3.2l-2 -7.7l-1.3 -5.4l-2.1 -9.3l-1.2 -6.9l-1.5 -10.8l-2 -16.3l-1 -10.8l-1.5 -21.6l-1 -21.7l-0.9 -27l-0.7 -32.5l-0.4 -32.4l-0.4 -43.3l-0.2 -54.1l-0.1 -162.3l-48.7 0zM743.5 401l13.8 1l10.9 0.5l27.1 1l37.9 0.7l48.8 0.3l0 -333.5l-267 0l0.2 70.3l0.5 48.7l0.5 21.7l0.5 16.2l0.6 16.2l0.9 16.2l1.3 16.3l1 10.8l1.3 10.8l1.8 10.8l2.1 10.9l1.6 6.5l2.9 9.7l1.9 5.4l2.3 5.4l2.6 5.4l3.1 5.4l3.6 5.4l4.5 5.4l5.5 5.5l6.1 4.8l5.4 3.4l4.6 2.6l6.2 2.8l6.7 2.6l4.2 1.4l5.4 1.5l10.4 2.5l5.9 1.1l10.8 1.7l10.8 1.4z"/>
<path fill="#ffcf00" d="M340 612l266.6 0l-28.1 -1l-21.7 -1.1l-21.7 -1.4l-20.7 -1.9l-17.2 -2.4l-10.9 -1.8l-5.4 -1l-10.8 -2.8l-9.4 -2.8l-6.9 -2.7l-5.4 -2.5l-5.4 -3l-5.4 -3.4l-6 -4.7l-4.9 -4.6l-5.4 -6.2l-5.4 -8.1l-4.3 -8.1l-2.4 -5.4l-4.2 -11.1l-2.9 -10.6l-2.5 -10.8l-2.7 -16.2l-2.2 -16.2l-1 -10.9l-1.6 -21.6l-1.1 -21.6l-0.9 -21.7l-0.6 -21.6l-0.5 -27.1l-0.3 -32.4l-0.5 -92l-0.1 -162.3l-48.1 0zM744.7 395.6l12.6 0.9l10.9 0.7l27.1 1l37.9 0.8l48.8 0.4l0 -328.4l-262.8 0l0.2 64.9l0.6 48.7l0.4 21.6l0.5 16.3l0.6 16.2l0.9 16.2l1.3 16.3l1 10.8l1.3 10.8l1.7 10.8l2.2 10.8l1.3 5.5l1.5 5.6l1.6 5.2l1.9 5.4l2.2 5.4l2.7 5.4l3 5.4l4.8 6.9l3.3 3.9l2.2 2.3l3.3 3.1l2.1 1.9l5.4 4l5.4 3.4l5.4 2.8l5.5 2.4l4.7 1.8l6.1 2l5.4 1.5l5.4 1.3l10.9 2.2l10.8 1.6l10.9 1.3z"/>
<path fill="#ffbf00" d="M340 612l235 0l-18.2 -0.9l-21.7 -1.5l-16.2 -1.5l-16.3 -1.9l-16.3 -2.7l-11.2 -2.3l-10.4 -3l-5.5 -1.8l-5.4 -2.1l-5.4 -2.4l-2.9 -1.5l-2.5 -1.4l-5.4 -3.4l-5.5 -4.2l-2.1 -1.9l-3.3 -3l-2.1 -2.4l-3.3 -3.8l-1.2 -1.6l-4.2 -6.1l-2.6 -4.7l-2.8 -5.4l-2.3 -5.4l-3.2 -8.4l-2.3 -7.9l-3.1 -12.3l-2.6 -14.7l-2.4 -16.2l-0.6 -5.4l-1 -10.9l-1.2 -16.2l-1 -16.2l-0.9 -21.7l-1.1 -37.8l-0.5 -32.5l-0.3 -32.5l-0.3 -86.5l-0.2 -156.9l-47.5 0zM747.3 390.2l10 0.8l16.3 1l27.1 1l32.5 0.7l48.8 0.4l0 -323.1l-258.5 0l0.3 64.9l0.6 48.7l0.5 21.6l0.5 16.3l0.7 16.2l0.6 10.8l1.2 16.3l1.1 10.8l1.4 10.8l1.6 10.8l1 5.4l2.5 10.8l2.6 9.4l2.4 6.9l3 7.2l1.8 3.6l3.1 5.4l3.6 5.4l2.4 3l2 2.4l3.4 3.5l5.4 4.8l5.4 3.9l5.4 3.2l5.5 2.7l5.4 2.3l3.3 1.3l7.5 2.4l5.4 1.5l5.5 1.3l5.4 1.1l10.8 1.9l10.9 1.4z"/>
<path fill="#ffaf00" d="M340 612l214 0l-18.9 -1.3l-16.2 -1.5l-16.3 -1.9l-5.4 -0.8l-5.4 -0.9l-10.9 -2l-10.8 -2.6l-5.4 -1.6l-5.5 -1.8l-5.4 -2l-5.4 -2.5l-5.4 -2.8l-5.4 -3.4l-5.5 -4l-5.4 -4.9l-5.4 -6l-5.4 -7.6l-3.7 -6.5l-1.7 -3.3l-3.2 -7.5l-2.2 -5.4l-1.6 -5.4l-3.1 -10.9l-1.2 -5.4l-3 -16.2l-2 -13.9l-1.8 -18.6l-1.3 -16.2l-1.2 -21.6l-0.9 -21.7l-0.5 -16.2l-0.5 -27.1l-0.6 -64.9l-0.3 -86.5l-0.2 -146.1l-46.9 0zM751.2 384.8l11.6 0.9l10.8 0.7l27.1 1.1l32.5 0.7l48.8 0.5l0 -317.7l-254.1 0l0.3 64.9l0.6 43.3l0.5 21.6l0.5 16.3l0.7 16.2l0.6 10.8l1.3 16.2l1 10.9l1.4 10.8l1.6 10.8l1.7 8.7l1.8 7.5l1.4 5.4l1.7 5.5l1.9 5.4l2.3 5.4l1.7 3.8l3.9 7l3.6 5.4l3.4 4.2l5.4 5.7l5.4 4.6l5.4 3.7l5.5 3.2l5.4 2.6l7.6 3.1l8.6 2.7l5.5 1.5l5.4 1.2l5.4 1.1l10.8 1.8l10.9 1.4z"/>
<path fill="#ff9f00" d="M340 612l198.3 0l-19.4 -1.8l-16.3 -1.9l-11.8 -1.7l-9.9 -1.9l-10.8 -2.6l-5.4 -1.5l-5.5 -1.9l-5.4 -2l-5.4 -2.4l-5.4 -2.8l-2 -1.1l-3.4 -2.2l-4.6 -3.3l-6.3 -5.4l-5.4 -5.9l-5.4 -7.4l-1.8 -2.9l-3.6 -6.6l-4.2 -9.6l-2 -5.4l-3.2 -10.9l-1.5 -5.4l-1.1 -5.4l-2.1 -10.8l-2.2 -13.9l-0.9 -7.7l-1.6 -16.3l-1.2 -16.2l-1.3 -21.6l-0.6 -16.3l-0.6 -21.6l-0.6 -27.1l-0.6 -59.5l-0.3 -86.5l-0.1 -151.5l-46.4 0zM756.6 379.4l11.6 0.9l10.8 0.6l27.1 1.2l32.5 0.7l43.4 0.4l0 -312.2l-249.6 0l0.3 59.5l0.7 48.7l0.6 21.6l0.6 16.3l0.8 16.2l0.7 10.8l0.8 10.8l1.2 12l1.2 9.7l1.7 10.8l2.1 10.8l1.3 5.4l1.5 5.4l1.7 5.4l1.9 5.5l2.2 5.4l2.6 5.4l3.1 5.4l3.6 5.4l4.2 5.2l5.4 5.4l5.4 4.4l5.5 3.7l5.2 2.9l5.6 2.7l7 2.7l3.8 1.4l5.5 1.6l5.4 1.4l5.4 1.2l5.4 1.1l10.9 1.8l10.8 1.4z"/>
<path fill="#ff8f00" d="M340 612l185.8 0l-17.8 -1.9l-16.2 -2.3l-5.5 -1l-5.4 -1l-10.8 -2.6l-7 -2l-3.9 -1.3l-5.4 -2.1l-5.4 -2.3l-5.4 -2.8l-5.4 -3.2l-5.5 -3.9l-5.4 -4.7l-5.4 -5.8l-5.4 -7.2l-2.8 -4.6l-2.6 -4.6l-2.9 -6.2l-2.3 -5.4l-1.8 -5.4l-1.7 -5.4l-2.2 -7.7l-2.9 -14l-2 -10.8l-1.4 -10.8l-1.2 -10.8l-1.5 -16.3l-1.1 -16.2l-0.9 -16.2l-0.8 -21.7l-0.5 -21.6l-0.5 -27.1l-0.6 -59.5l-0.3 -86.5l-0.1 -146.1l-45.8 0zM763.6 374l20.8 1.4l27.1 1.1l32.6 0.7l37.9 0.4l0 -306.6l-244.9 0l0.3 59.5l0.6 43.3l0.6 21.6l0.6 16.3l0.8 16.2l0.7 10.8l0.9 10.8l1.1 10.8l1.3 10.9l1.7 10.8l2.2 10.8l1.2 5.4l1.5 5.4l1.7 5.4l2.1 5.8l2.1 5.1l2.6 5.4l3.1 5.4l3.7 5.4l4.4 5.4l5.7 5.7l5.5 4.2l5.4 3.6l4.9 2.7l5.9 2.8l6.8 2.6l4.1 1.4l5.4 1.6l10.2 2.4l6 1.2l10.9 1.8l10.8 1.3z"/>
<path fill="#ff8000" d="M340 612l175.6 0l-13 -1.6l-16.3 -2.6l-6.5 -1.2l-9.7 -2.4l-10.4 -3l-5.9 -2.2l-7.3 -3.2l-3.5 -1.9l-6.1 -3.5l-4.8 -3.5l-5.4 -4.6l-5.4 -5.7l-2 -2.5l-4 -5.4l-4.8 -8.1l-3.8 -8.1l-1.7 -3.9l-2.3 -6.9l-3.3 -10.9l-2.4 -10.8l-2.8 -15.1l-1.6 -11.9l-1.2 -10.8l-1.4 -16.3l-1.2 -16.9l-0.8 -15.5l-0.7 -21.7l-0.6 -21.6l-0.5 -27.1l-0.6 -59.5l-0.3 -86.5l-0.1 -146.1l-45.2 0zM772.6 368.5l11.8 0.8l10.9 0.6l21.7 0.8l27.1 0.7l37.9 0.4l0 -300.8l-240.1 0l0.4 59.5l0.7 43.3l0.6 21.6l0.7 16.3l0.9 16.2l0.8 10.8l1.5 16.2l1.3 10.9l1.8 10.8l1 5.4l2.4 10.8l1.5 5.4l1.8 5.4l1.9 5.4l2.3 5.4l2.6 5.5l3.1 5.4l3.7 5.4l5.1 6l5.5 5.2l5.4 4.2l5.4 3.5l5.4 2.9l5.4 2.5l5.5 2.1l5.4 1.8l5.4 1.6l5.4 1.3l5.4 1.3l10.9 1.9l10.8 1.5l10.9 1.2z"/>
<path fill="#ff7000" d="M340 612l167 0l-15.2 -2.2l-10.9 -2l-5.4 -1.1l-10.8 -2.9l-5.5 -1.7l-5.4 -2l-5.4 -2.3l-4.2 -2l-6.6 -3.9l-5.5 -3.7l-5.4 -4.5l-5.4 -5.6l-5.4 -6.9l-1.7 -2.5l-3.7 -6.2l-4.8 -10l-2 -5.4l-1.9 -5.4l-2.2 -7.2l-2.2 -9.1l-1.1 -5.4l-2.1 -10.8l-2.2 -16.2l-1.7 -16.3l-1.4 -16.2l-0.6 -10.8l-1 -21.6l-0.8 -21.7l-0.5 -21.6l-0.4 -27.1l-0.6 -59.5l-0.2 -86.5l-0.1 -140.7l-44.7 0zM784.4 363.1l21.7 1.2l21.7 0.7l27.1 0.6l27.1 0.3l0 -294.9l-235.1 0l0.4 59.5l0.8 43.3l0.5 16.2l0.6 16.2l1 16.3l0.8 10.8l0.9 10.8l1.3 10.8l1.5 10.9l2 10.8l2.4 10.8l1.5 5.4l1.8 5.4l1.9 5.4l2.4 5.4l2.6 5.4l3.2 5.5l3.8 5.4l5.2 6l5.4 5.1l5.4 4.1l5.4 3.4l5.6 3l5.3 2.4l5.4 2.1l5.4 1.7l5.4 1.6l10.9 2.5l10.8 2l10.8 1.4l10.9 1.2z"/>
<path fill="#ff6000" d="M340 612l159.7 0l-13.4 -2.2l-5.4 -1l-9.9 -2.2l-6.3 -1.8l-5.5 -1.7l-5.4 -1.9l-5.4 -2.3l-5.4 -2.6l-5.4 -3.2l-5.5 -3.6l-5.4 -4.5l-5.4 -5.4l-5.4 -6.8l-2.7 -4.1l-2.7 -4.4l-3.2 -6.4l-2.5 -5.4l-1.9 -5.4l-3.3 -9.8l-1.6 -6.5l-2.5 -10.8l-1.3 -6.8l-2.2 -14.8l-1.9 -16.2l-1.3 -15l-0.8 -12.1l-0.9 -16.2l-0.6 -16.3l-0.7 -21.6l-0.5 -21.6l-0.4 -27.1l-0.5 -59.5l-0.2 -81.1l-0.1 -140.7l-44.1 0zM800.7 357.7l16.3 0.7l16.2 0.6l21.7 0.4l27.1 0.4l0 -288.8l-230 0l0.5 59.5l0.3 21.6l0.5 21.7l0.6 16.2l0.7 16.2l1.1 16.3l0.9 10.8l1.8 16.2l1.4 10.1l1 6.2l2.3 10.8l2.1 8.3l2.5 7.9l2.9 7.6l1.5 3.2l2.7 5.4l3.3 5.4l3.8 5.5l5 5.6l5.4 5.1l5.4 4l5.4 3.4l5.5 2.9l5.4 2.4l5.4 2.1l4.6 1.5l6.2 1.8l10.9 2.5l5.9 1.1l10.3 1.6l16.3 1.9l10.8 0.9z"/>
<path fill="#ff5000" d="M340 612l153.2 0l-12.3 -2.2l-10.8 -2.5l-5.4 -1.4l-5.5 -1.8l-8 -2.9l-2.8 -1.2l-5.4 -2.6l-5.4 -3.1l-5.9 -3.9l-5 -4.1l-1.4 -1.3l-4 -4l-5.6 -6.9l-5.2 -8.1l-4.1 -8.1l-2.4 -5.4l-2 -5.4l-2.4 -7.2l-2.3 -9.1l-2.5 -10.8l-1.9 -10.8l-1.5 -10.8l-1.3 -10.8l-1.3 -12.9l-1.4 -19.6l-0.8 -16.2l-0.7 -16.3l-0.6 -21.6l-0.5 -21.6l-0.4 -27.1l-0.5 -59.5l-0.3 -81.1l-0.1 -140.7l-43.5 0zM825.8 352.3l23.7 0.7l32.5 0.5l0 -282.5l-224.7 0l0.5 59.5l0.4 21.6l0.6 21.7l0.6 16.2l0.9 16.2l1.2 16.3l1 10.8l1.3 10.8l1.5 10.8l2.1 10.9l2.5 10.8l1.6 5.4l1.8 5.4l2.1 5.4l2.4 5.4l3.7 7l2.4 3.8l3 4.2l5.4 6.2l5.4 5l5.4 4l5.5 3.4l5.4 2.9l5.4 2.4l5.4 2l5.4 1.8l5.5 1.6l10.8 2.5l10.8 1.9l10.9 1.5l10.8 1.1l16.3 1.3l16.2 0.9z"/>
<path fill="#ff4000" d="M340 612l147.5 0l-12 -2.4l-10.8 -2.7l-5.5 -1.7l-5.4 -2l-5.2 -2l-5.6 -2.7l-5.4 -3l-5.5 -3.6l-1.9 -1.5l-3.5 -2.8l-2.8 -2.7l-2.6 -2.6l-2.4 -2.8l-3 -3.6l-1.3 -1.8l-4.1 -6.4l-5.1 -9.8l-2.2 -5.4l-3.6 -10.1l-3.1 -11.6l-2.3 -10.3l-1.9 -11.3l-1.5 -10.8l-1.9 -16.2l-0.9 -10.9l-1.1 -16.2l-0.9 -16.2l-0.8 -21.7l-0.6 -21.6l-0.8 -43.3l-0.5 -54.1l-0.2 -86.5l-0.1 -140.7l-43 0zM879.3 346.9l2.7 0l0 -275.9l-219.2 0l0.2 32.5l0.4 27l0.4 21.6l0.7 21.7l0.7 16.2l1 16.2l1.3 16.3l1.2 10.8l1.4 10.8l1.9 10.8l2.3 10.9l1.4 5.4l1.6 5.4l1.9 5.4l2.1 5.4l2.5 5.4l3.1 5.8l3.2 5l2.2 3l2 2.4l3.4 3.9l5.4 4.9l5.5 4.1l5.4 3.5l5.4 2.8l5.4 2.4l5.4 2l5.5 1.8l5.4 1.6l5.4 1.3l10.8 2.2l10.9 1.7l10.8 1.3l16.3 1.5l16.2 1l21.7 0.9l21.7 0.6z"/>
<path fill="#ff3000" d="M340 612l142.4 0l-12.3 -2.8l-9.6 -2.6l-6.7 -2.3l-7.5 -3.1l-3.3 -1.7l-5.4 -2.9l-5.5 -3.6l-5.4 -4.2l-5.4 -5.1l-5.4 -6.4l-5.4 -7.9l-3.3 -6.1l-2.2 -4.3l-2.6 -6.5l-2 -5.4l-1.7 -5.4l-2.9 -10.9l-1.6 -6.9l-0.7 -3.9l-1.8 -10.8l-2.3 -16.2l-0.6 -5.6l-1.4 -16.1l-1.1 -16.2l-0.8 -16.2l-0.9 -21.7l-0.6 -21.6l-0.7 -37.9l-0.5 -64.9l-0.2 -81.1l-0.1 -140.7l-42.5 0zM787.3 336.1l18.8 1.5l21.7 1.2l27.1 0.9l27.1 0.5l0 -269.2l-213.5 0l0.5 48.7l0.8 37.9l1.1 27l1.1 16.2l0.8 10.9l1.1 10.8l1.3 10.8l0.8 5.8l1.9 10.4l2.4 10.8l1.4 5.5l1.7 5.4l1.9 5.4l2.2 5.4l2.6 5.4l3 5.4l3.6 5.4l4.4 5.4l2 2.3l3.3 3.1l2.2 1.9l5.4 4.2l5.4 3.4l2.5 1.4l2.9 1.4l5.4 2.5l5.5 2.1l5.4 1.8l5.4 1.5l5.4 1.4l5.4 1.1l10.9 2l10.8 1.5z"/>
<path fill="#ff2000" d="M340 612l137.8 0l-7.7 -1.8l-10.9 -3l-5.4 -1.9l-5.4 -2.2l-4.3 -1.9l-6.5 -3.6l-5.5 -3.4l-5.4 -4.1l-5.5 -5.2l-5.3 -6.1l-3.3 -4.7l-2.1 -3.1l-1.3 -2.3l-4.2 -7.9l-3.4 -8.3l-2 -5.4l-1.6 -5.4l-2.9 -10.9l-0.9 -3.8l-1.4 -7l-1.8 -10.8l-2.2 -16.2l-2 -21.7l-1.1 -16.2l-0.8 -16.2l-0.9 -21.7l-0.6 -21.6l-0.7 -43.3l-0.4 -59.5l-0.2 -81.1l-0.1 -140.7l-42 0zM811.4 330.7l16.4 0.9l16.3 0.7l16.2 0.4l21.7 0.5l0 -262.2l-207.6 0l0.6 48.7l0.5 21.6l0.5 16.3l1.2 27l1.2 16.2l1 10.9l1.2 10.8l1.5 10.8l2 10.8l2.5 10.8l1.5 5.4l1.7 5.5l2 5.4l2.3 5.4l2.7 5.4l3.2 5.4l3.8 5.4l4.8 5.7l5.4 5.1l5.4 4.2l5.4 3.4l5.4 3l5.5 2.4l5.4 2.2l3.2 1.1l7.6 2.2l5.4 1.4l10.9 2.2l10.8 1.7l10.9 1.4l10.8 1z"/>
<path fill="#ff1000" d="M340 612l133.6 0l-8.9 -2.3l-10 -3.1l-6.3 -2.5l-6.4 -2.9l-4.4 -2.5l-4.8 -2.9l-6.1 -4.6l-5.4 -4.9l-5.4 -6.1l-4.4 -6.1l-1 -1.6l-2.2 -3.8l-3.3 -6l-4.2 -10.2l-1.2 -3.2l-2.3 -7.6l-2.9 -10.9l-1.2 -5.4l-1.9 -10.8l-2.5 -16.7l-1.6 -15.7l-1.3 -16.3l-1 -16.2l-0.8 -16.2l-0.6 -16.3l-0.5 -16.2l-0.7 -48.7l-0.5 -59.5l-0.2 -81.1l-0.1 -140.7l-41.5 0zM856.3 325.3l25.7 0.6l0 -254.9l-201.4 0l0.7 48.7l0.5 21.6l0.6 16.3l0.8 16.2l1.1 16.2l1.4 16.2l1.2 10.2l1.7 11.5l2 10.8l1.7 7.4l2.5 8.8l2.9 8.4l3.4 7.9l2.9 5.4l3.3 5.4l4.1 5.4l2.6 3l2.3 2.4l3.1 2.9l3 2.5l2.4 1.8l5.4 3.6l5.5 3l5.4 2.5l5.4 2.2l5.4 1.8l4.4 1.3l6.5 1.7l10.8 2.3l10.8 1.8l10.9 1.3l10.8 1.1l16.3 1.2l16.2 0.8z"/>
<path fill="#ff0000" d="M340 612l129.7 0l-10.5 -3l-7.1 -2.4l-3.7 -1.5l-5.4 -2.5l-5.4 -2.8l-5.5 -3.4l-5.4 -4l-5.4 -4.9l-5.4 -6l-5.4 -7.4l-3.1 -5.4l-2.9 -5.4l-4.5 -10.8l-1.8 -5.4l-1.6 -5.4l-2.4 -8.8l-1.6 -7.5l-2 -10.8l-1.6 -10.8l-0.7 -5.4l-1.2 -10.8l-1.4 -16.3l-1.1 -16.2l-0.8 -16.2l-0.7 -16.3l-0.5 -16.2l-0.8 -48.7l-0.4 -59.5l-0.3 -86.5l-0.1 -140.7l-41 0zM805.9 314.4l16.5 1.4l16.2 1l21.7 0.9l21.7 0.5l0 -247.2l-194.9 0l0.6 43.3l1 32.4l0.7 16.3l0.7 10.8l1.2 16.2l1 10.8l1.4 10.9l1.7 10.8l2.1 10.8l1.3 5.4l1.4 5.4l2.9 9.1l2.9 7.1l2.6 5.4l3 5.5l3.6 5.4l4.3 5.4l5.3 5.3l5.4 4.5l1.5 1l4 2.7l5.4 3.1l5.4 2.5l6.1 2.5l4.7 1.7l5.5 1.6l5.4 1.5l5.4 1.2l10.8 2l10.9 1.6z"/>
<path fill="#ef0000" d="M340 612l126.3 0l-7.1 -2.1l-5.4 -1.8l-4.1 -1.5l-6.7 -3l-5.4 -2.8l-5.5 -3.3l-2.4 -1.7l-3 -2.3l-3.6 -3.1l-1.8 -1.7l-3.6 -3.8l-1.8 -2.1l-2.6 -3.3l-3.7 -5.4l-4.6 -8l-3.6 -8.2l-2.2 -5.4l-3.3 -10.8l-1.7 -6l-2.2 -10.3l-2.9 -16.2l-0.8 -5.4l-1.7 -16.2l-1.8 -21.7l-1 -16.2l-0.9 -16.2l-0.8 -27.1l-0.8 -48.7l-0.4 -59.5l-0.3 -86.5l-0.1 -140.7l-40.5 0zM846.8 309l18.9 0.8l16.3 0.4l0 -239.2l-188.1 0l0.7 43.3l0.7 21.6l0.7 16.2l0.9 16.3l0.8 10.8l1.1 10.8l1.2 10.8l1.6 10.9l1.5 8.7l1.7 7.5l1.3 5.4l1.6 5.4l1.7 5.4l2.1 5.4l2.3 5.4l2.8 5.4l2.8 4.7l4.4 6.2l4.8 5.4l1.6 1.6l5.5 4.7l5.4 3.9l5.4 3.2l5.6 2.8l5.2 2.2l5.5 2l5.4 1.7l5.4 1.5l5.4 1.3l10.9 2.1l5.4 0.8l10.8 1.5l10.9 1.1l16.2 1.3z"/>
<path fill="#df0000" d="M340 612l123 0l-9.2 -3l-6.4 -2.4l-4.4 -2l-5.4 -2.8l-5.5 -3.3l-5.4 -3.9l-5.4 -4.7l-5.4 -5.7l-3.6 -4.7l-1.8 -2.5l-1.8 -2.9l-3.7 -6.3l-4.4 -9.9l-2.1 -5.4l-3.4 -10.8l-1.5 -5.4l-2.2 -10.9l-2.9 -16.2l-0.8 -5.4l-1.7 -16.2l-1.8 -21.7l-1.7 -27l-0.4 -10.8l-0.4 -16.3l-0.9 -54.1l-0.4 -59.5l-0.3 -86.5l-0.1 -140.7l-40 0zM818.2 298.2l9.6 0.9l16.3 1.2l16.2 0.8l21.7 0.7l0 -230.8l-180.9 0l0.7 37.9l0.4 16.2l0.7 16.2l0.9 16.3l0.8 10.8l1 10.8l1.2 10.8l1.4 10.8l0.9 5.4l2.2 10.9l1.2 5.4l1.5 5.5l1.6 5.3l2 5.4l2.1 5.4l2.6 5.4l3 5.4l3.6 5.4l4.4 5.5l2.4 2.6l2.9 2.8l2.5 2.2l4.1 3.2l6.7 4.3l5.4 2.8l5.5 2.4l5.4 2.1l5.4 1.8l5.4 1.5l5.1 1.3l5.8 1.2l10.8 2l10.8 1.5z"/>
<path fill="#cf0000" d="M340 612l120 0l-6.2 -2.1l-5.4 -2l-3.2 -1.3l-7.6 -3.8l-5.5 -3.2l-5.4 -3.8l-6.2 -5.4l-4.6 -5l-5.4 -7l-2.7 -4.3l-3.1 -5.4l-4.9 -10.8l-2 -5.4l-3.4 -10.8l-1.5 -5.4l-2.2 -10.9l-3 -16.2l-0.6 -5.4l-2.1 -21.6l-2.2 -27.1l-0.9 -16.2l-0.6 -21.7l-1 -59.5l-0.4 -59.5l-0.3 -86.5l-0.1 -140.7l-39.5 0zM876.5 292.8l5.5 0.2l0 -222l-173.4 0l0.8 37.9l0.6 16.2l0.8 16.2l1.1 16.3l0.9 10.8l1.1 10.8l1.4 10.8l1.9 10.8l2.2 10.8l1.4 5.5l1.6 5.4l1.8 5.4l2.1 5.4l2.4 5.4l1.5 3.1l1.3 2.3l4.2 6.6l3.2 4.2l2.2 2.6l2.6 2.8l2.8 2.7l5.4 4.4l5.4 3.6l5.5 3l5.4 2.6l5.4 2.2l5.4 1.9l4.2 1.3l6.7 1.7l10.8 2.3l10.8 1.8l10.9 1.4l10.8 1.1l16.3 1.2l10.8 0.6z"/>
<path fill="#bf0000" d="M340 612l117.2 0l-8.8 -3.2l-5.3 -2.2l-5.5 -2.8l-5.5 -3.2l-5.4 -3.8l-5.4 -4.6l-5.4 -5.6l-5.6 -7.1l-3.4 -5.4l-3.1 -5.4l-4.9 -10.8l-4.7 -14.7l-0.6 -1.5l-1.3 -5.4l-3.5 -18l-1 -3.7l-0.8 -5.4l-0.9 -10.8l-1.7 -16.2l-1 -12.6l-1 -9.1l-0.4 -5.4l-0.8 -16.2l-0.4 -16.3l-1 -70.3l-0.4 -54.1l-0.3 -86.5l-0.1 -140.7l-39 0zM851.2 282l14.5 0.9l16.3 0.7l0 -212.6l-165.4 0l0.5 21.6l0.5 16.3l1.3 27l0.7 10.8l0.9 10.9l1.1 10.8l1.4 10.8l1.7 10.8l1 5.4l2.5 10.8l2 7.2l1.3 3.7l2 5.4l2.2 5.3l2.8 5.5l3.1 5.4l3.8 5.4l4.6 5.4l1.9 2l5.4 4.9l5.5 4l5.4 3.2l5.4 2.8l5.4 2.3l5.4 2.1l5.5 1.7l5.4 1.5l5.4 1.3l6 1.3l10.3 1.7l10.8 1.5l10.8 1.2z"/>
<path fill="#af0000" d="M340 612l114.5 0l-11.5 -4.4l-10.9 -5.9l-5.4 -3.9l-5.4 -4.5l-5.4 -5.4l-6.7 -8.4l-4.2 -7l-2 -3.8l-3.4 -7.5l-1.7 -3.3l-1.5 -5.4l-2.2 -6.9l-1.6 -3.9l-2 -10.9l-1.8 -9.1l-0.6 -1.7l-1.3 -5.4l-0.6 -5.4l-0.8 -10.8l-1.1 -10.8l-1 -11l-0.9 -5.3l-0.6 -5.4l-0.4 -5.4l-0.8 -16.2l-0.4 -16.2l-1 -75.8l-0.4 -54.1l-0.3 -86.5l-0.1 -140.7l-38.5 0zM845.7 271.2l14.6 1.2l21.7 1.2l0 -202.6l-156.9 0l1 32.5l0.7 16.2l0.7 10.8l0.8 10.8l0.9 10.8l1.2 10.9l1.6 10.8l1.9 10.8l1.1 5.4l1.3 5.4l1.5 5.4l1.6 5.4l1.9 5.5l2.3 5.4l2.6 5.4l3 5.4l3.7 5.4l4.3 5.4l5.6 5.5l5.4 4.4l5.4 3.6l5.4 3.1l5.4 2.5l5.5 2.2l5.4 1.9l5.4 1.6l5.4 1.5l5.4 1.2l5.5 1.1l10.8 1.7l10.8 1.4z"/>
<path fill="#9f0000" d="M340 612l112.1 0l-9.1 -3.3l-3.7 -2.1l-7.2 -3.7l-2.1 -1.7l-3.3 -2.4l-3.9 -3l-1.5 -1.4l-4.2 -4l-1.2 -1.3l-3.5 -4.2l-4.2 -5.4l-6.1 -10.8l-2.5 -5.7l-2.6 -5.1l-1.3 -5.4l-1.5 -4.7l-0.6 -0.7l-2 -5.4l-1.6 -10.9l-1.2 -5.9l-1.8 -4.9l-1 -5.4l-0.5 -5.4l-0.5 -10.8l-1.6 -15.5l-1.4 -6.2l-0.6 -5.4l-0.5 -5.4l-0.6 -10.8l-0.4 -16.2l-0.5 -48.7l-0.6 -37.9l-0.4 -54.1l-0.3 -86.5l0 -140.7l-38.1 0zM849.3 260.3l16.4 1.5l16.3 1.1l0 -191.9l-147.7 0l0.5 16.2l0.6 16.3l1.3 21.6l0.9 10.8l1.1 10.8l1.3 10.9l1.1 7.5l1.5 8.7l1.2 5.4l2.7 10.8l1.7 5.4l1.9 5.4l2.1 5.4l2.6 5.5l3 5.4l3.6 5.4l1.4 1.8l2.9 3.6l2.5 2.7l2.8 2.7l2.6 2.3l5.4 4.1l5.4 3.4l5.5 2.8l5.4 2.5l5.4 2.1l5.4 1.7l5.4 1.6l4.6 1.1l6.3 1.4l10.8 1.9l5.4 0.8z"/>
<path fill="#8f0000" d="M340 612l109.7 0l-6.7 -2.2l-5.6 -3.2l-5.3 -2.4l-3.5 -3l-1.9 -1.3l-5.1 -4.1l-5.7 -5.5l-4.5 -5.4l-4.3 -5.4l-2.1 -3.6l-1.7 -1.8l-2 -5.4l-1.7 -3.8l-1.6 -1.6l-1.9 -5.4l-1.1 -5.4l-0.8 -2.6l-2.2 -2.8l-1.3 -5.4l-0.5 -5.4l-0.8 -5.5l-0.6 -2.9l-1.6 -2.5l-1.4 -5.4l-0.6 -5.4l-0.4 -5.4l-0.4 -10.8l-1 -9.8l-0.5 -1l-1.5 -5.4l-0.7 -5.5l-0.8 -10.8l-0.5 -16.2l-0.3 -21.6l-0.2 -37.9l-0.6 -43.3l-0.4 -40.4l-0.5 -24.5l-0.5 -37.9l-0.3 -64.9l-0.2 -108.2l-36.4 0zM860.6 249.5l10.6 1l10.8 0.8l0 -180.3l-137.9 0l1.2 27l1.3 21.7l1 10.8l1.2 10.8l1.5 10.8l0.9 5.5l1 5.4l2.4 10.8l1.5 5.4l1.6 5.4l2 5.4l3.1 7.4l1.7 3.4l3.7 6.6l2.9 4.3l2.5 3.3l1.8 2.1l3.6 3.8l1.7 1.6l3.7 3.1l5.5 4l5.4 3.2l5.4 2.7l5.4 2.4l5.4 2l5.5 1.7l9.5 2.5l6.7 1.4l10.9 1.9l5.4 0.8z"/>
<path fill="#870000" d="M340 612l106.7 0l-9.1 -2.6l-2.8 -2.8l-2.7 -1.2l-5.4 -4.5l-5.4 -2.7l-8 -7.8l-2.8 -5.3l-4.4 -5.6l-1.1 -1.8l-3.5 -3.6l-1 -5.4l-0.9 -1.9l-3.5 -3.5l-1.9 -11.3l-3.8 -4.9l-0.7 -5.4l-0.2 -5.4l-0.7 -5.3l-3.5 -5.6l-0.7 -5.4l-0.3 -5.4l-0.4 -16.2l-0.5 -4.5l-0.9 -0.9l-2.1 -5.4l-0.7 -5.4l-0.4 -5.5l-0.4 -10.8l-0.3 -27l-0.2 -43.3l-0.5 -32.9l-0.6 -5l-0.5 -5.4l-0.8 -16.2l-0.5 -16.2l-0.4 -27.1l-0.5 -75.7l-0.1 -146.1l-34.5 0zM882 238.7l0 -167.7l-127.2 0l1.1 21.6l0.7 10.9l0.9 10.8l1.1 10.8l1.4 10.8l1.7 10.8l1.1 5.8l2.4 10.5l1.5 5.4l1.7 5.4l2 5.4l2.2 5.4l2.7 5.4l3.1 5.4l3.7 5.4l2.3 3l2.2 2.4l3.3 3.4l2.3 2.1l3.1 2.5l5.4 3.9l5.4 3.2l5.4 2.7l5.5 2.3l5.4 1.9l5.4 1.7l5.4 1.5l5.4 1.3l5.5 1.1l5.4 1l10.8 1.6l10.9 1.3z"/>
</g>
<g fill="none" stroke-width="1" shape-rendering="crispEdges" clip-path="url(#pc)">
<path stroke="#0000af" d="M476.2 71l-0.4 102.8l-0.6 64.9l-0.4 27.1l-0.6 27l-0.7 21.6l-0.9 21.7l-1.3 21.6l-1.2 14.8l-0.9 6.9l-1.8 10.8l-1.1 5.4l-1.6 7.2l-1.9 3.6l-3.6 5.9l-5.4 -1.5l-5.4 -11.9l-2.8 -14.1l-2.6 -15.1l-1.1 -12l-1.2 -16.2l-1 -16.2l-1 -21.7l-0.8 -21.6l-0.4 -16.2l-0.5 -32.5l-0.4 -43.3l-0.4 -119"/>
<path stroke="#0000ff" d="M500.4 71l-0.4 162.3l-0.8 119l-0.4 37.9l-0.5 27l-0.5 16.3l-0.9 16.2l-1 10.8l-0.7 5.4l-0.8 5.4l-1.2 5.4l-1.4 5.5l-2.1 5.4l-3.4 6.1l-4.2 4.7l-1.2 1l-5.4 3l-5.4 1l-5.4 -0.6l-5.5 -2.1l-5.4 -3.9l-5.4 -6l-5.4 -8.9l-5.4 -13.5l-2.2 -7.9l-2.6 -10.8l-0.7 -3.1l-1.2 -7.7l-1.5 -10.8l-1.3 -10.9l-1.2 -10.8l-0.4 -5.4l-1.6 -27l-1.3 -32.5l-0.8 -32.5l-0.5 -37.8l-0.5 -48.7l-0.2 -64.9l-0.2 -86.6"/>
<path stroke="#0060ff" d="M519.5 71l-0.2 162.3l0 59.5l0.4 48.7l0.7 37.9l0.5 16.2l0.7 16.2l1 16.3l0.9 10.8l1.6 16.2l1.4 10.8l4.8 32.5l0.6 5.4l0.3 5.4l-0.2 5.4l-1.2 5.4l-2.6 5.4l-3.9 4.3l-1.3 1.1l-4.1 2.6l-6 2.9l-4.9 1.4l-5.4 1.3l-5.4 0.8l-5.4 0.4l-5.5 0.1l-5.4 -0.4l-5.4 -0.8l-5.4 -1.4l-5.4 -1.8l-5.5 -2.7l-5.4 -3.5l-5.4 -4.7l-5.4 -6.2l-5.4 -8.3l-0.7 -1.3l-4.8 -10.2l-2 -6l-3.4 -10.8l-2.3 -10.9l-3 -16.2l-1.3 -10.8l-1.2 -10.8l-1 -10.9l-1.2 -16.2l-0.8 -14.4l-0.3 -7.2l-1.2 -37.9l-0.7 -43.3l-0.5 -54.1l-0.2 -70.3l-0.2 -108.2"/>
<path stroke="#00afff" d="M882 569.4l-108.4 -0.4l-37.1 -0.3l-27.9 -0.3l-168.1 -3l-16.2 -0.5l-16.3 -0.8l-10.8 -1l-10.9 -1.6l-5.4 -1.1l-5.4 -1.3l-5.4 -1.6l-5.4 -2.1l-5.5 -2.5l-5.4 -3.2l-5.4 -3.9l-5.4 -4.9l-5.4 -6.3l-2.6 -3.8l-3.4 -5.4l-4.9 -10l-2.2 -6.2l-3.2 -9.6l-1.6 -6.6l-2.4 -10.8l-1.4 -7.4l-0.5 -3.5l-1.5 -10.8l-1.2 -10.8l-2 -21.6l-1.3 -21.7l-1 -27l-0.8 -32.5l-0.5 -32.5l-0.4 -43.2l-0.3 -48.7l-0.2 -151.5M537.4 71l0 146.1l0.3 70.3l0.4 27l0.7 27.1l0.9 21.6l1 16.3l1.4 16.2l2 16.2l1.7 10.8l1.1 5.5l2.5 10.8l1.5 5.4l1.8 5.4l2 5.4l2.1 4.9l3 5.9l2.4 4.2l5.4 7.7l5.5 6.1l5.4 4.9l5.4 4l5.4 3.3l5.4 2.8l5.5 2.4l5.4 2l5.4 1.8l5.4 1.5l5.4 1.3l10.9 2.1l10.8 1.6l5.4 0.6l10.9 1.1l16.2 1l21.7 1l21.7 0.5l21.7 0.3l32.5 0.2l108.4 -0.2"/>
<path stroke="#10ffef" d="M882 587.4l-140.9 -0.4l-48.8 -0.4l-43.4 -0.6l-37.9 -0.8l-21.7 -0.8l-32.5 -1.6l-27.1 -1.8l-16.7 -1.5l-15.8 -2.1l-10.9 -1.9l-5.4 -1.2l-5.4 -1.4l-5.4 -1.7l-5.4 -1.9l-5.5 -2.4l-5.4 -2.8l-1.3 -0.8l-4.1 -2.6l-3.7 -2.8l-1.7 -1.4l-5.4 -5.1l-5.5 -6.6l-5.5 -8.5l-5.3 -11.1l-1.9 -5.2l-3.5 -10.7l-1.4 -5.5l-2.4 -10.8l-2 -10.8l-1.4 -10.9l-1.3 -10.8l-2 -21.6l-1.3 -21.7l-1.1 -27l-0.8 -32.5l-0.5 -32.4l-0.4 -43.3l-0.3 -48.7l-0.2 -162.3M555.3 71l0.1 124.4l0.2 37.9l0.3 32.5l0.5 27l0.7 21.6l1 21.7l1 16.2l1.6 16.2l1.3 10.9l0.8 5.4l1.9 10.8l1.2 5.4l1.7 7.1l2.9 9.1l1.9 5.4l2.3 5.5l3.8 7.3l2.1 3.5l3.8 5.4l4.9 5.7l5.5 5.1l5.4 4.1l2 1.3l3.4 2.1l6.4 3.3l4.4 2l5.4 2l5.5 1.8l5.4 1.5l5.4 1.3l5.4 1.2l5.4 1l10.9 1.6l16.2 1.8l16.3 1.2l16.3 0.8l21.6 0.7l27.1 0.5l27.1 0.3l38 0.1l59.6 0.1"/>
<path stroke="#70ff8f" d="M882 598.2l-86.7 -0.2l-65.1 -0.2l-48.7 -0.4l-38 -0.5l-32.5 -0.7l-27.1 -0.9l-27.1 -1.4l-16.3 -1.2l-10.8 -0.8l-16.3 -1.6l-10.8 -1.5l-10.8 -1.8l-10.9 -2.2l-10.8 -3l-5.4 -1.8l-5.5 -2.2l-5.4 -2.5l-5.4 -3.1l-5.4 -3.6l-5.4 -4.4l-5.5 -5.5l-5.4 -6.9l-2.9 -4.7l-3.1 -5.4l-4.9 -10.9l-1.8 -5.4l-3.4 -10.8l-2.4 -10.8l-2.1 -10.8l-1.1 -6.2l-1.3 -10.1l-1.2 -10.8l-1.8 -21.6l-1.1 -16.2l-1.1 -27.1l-0.9 -32.5l-0.5 -37.8l-0.4 -43.3l-0.2 -48.7l-0.3 -167.7M574 71l0.1 108.2l0.3 37.9l0.3 27l0.6 27.1l0.7 21.6l1.2 21.6l1.2 16.3l1.7 16.2l1.5 10.8l0.9 5.4l2.2 10.9l1.4 5.4l1.5 5.4l1.7 5.4l2 5.4l3.4 7.8l1.6 3l3.2 5.4l3.9 5.4l2.2 2.8l2.4 2.6l3 3l5.4 4.6l5.4 3.7l5.5 3.1l5.4 2.6l5.4 2.3l5.4 1.9l5.4 1.6l5.5 1.4l10.8 2.3l10.8 1.8l5.5 0.7l10.8 1.2l16.3 1.3l16.2 1l21.7 0.8l27.1 0.5l27.1 0.4l81.3 0.2"/>
<path stroke="#bfff40" d="M882 606.3l-140.9 -0.2l-48.8 -0.3l-37.9 -0.5l-32.6 -0.6l-32.5 -0.9l-27.1 -1.2l-22.4 -1.4l-20.9 -2l-10.9 -1.3l-10.8 -1.5l-5.4 -0.9l-5.5 -1.1l-10.8 -2.5l-5.4 -1.4l-5.4 -1.8l-5.5 -2l-5.4 -2.3l-5.4 -2.8l-5.4 -3.2l-5.4 -3.9l-5.5 -4.8l-0.9 -1l-4.9 -5.4l-5 -6.9l-2.3 -3.9l-3.1 -5.7l-4.5 -10.5l-1.9 -5.5l-1.6 -5.4l-2.9 -10.6l-1.1 -5.6l-2 -10.8l-2.4 -16.2l-1.1 -10.9l-1.4 -16.2l-1.4 -21.6l-1.2 -27.1l-0.8 -27l-0.5 -32.5l-0.4 -43.3l-0.3 -54.1l-0.2 -178.5M593.9 71l0.3 92l0.2 32.4l0.4 27.1l0.5 21.6l0.8 21.7l1.1 21.6l1.2 16.2l1.7 16.3l1.5 10.8l1 5.4l2.1 10.8l1.3 5.4l1.5 5.4l1.7 5.4l1.8 5l2.5 5.9l2.9 5.9l2.9 4.9l3.7 5.4l4.6 5.4l5.6 5.4l4.9 3.8l2.3 1.6l3.1 2l5.4 3l5.5 2.4l5.4 2.2l5.4 1.8l5.4 1.6l5.4 1.4l5.5 1.2l10.8 1.9l10.8 1.5l16.3 1.7l16.3 1.2l21.6 1l21.7 0.6l27.1 0.5l32.5 0.3l43.4 0.1"/>
<path stroke="#ffdf00" d="M648.2 612l-37.2 -0.8l-32.5 -1.1l-27.1 -1.3l-21.7 -1.6l-7.1 -0.6l-9.2 -1l-16.2 -2.2l-12.8 -2.2l-8.9 -2l-5.4 -1.5l-5.4 -1.5l-5.5 -1.9l-5.4 -2.2l-5.4 -2.5l-5.4 -3l-2.7 -1.6l-2.7 -1.9l-4.7 -3.6l-6.2 -5.8l-5.4 -6.4l-5.4 -8.1l-3.5 -6.7l-1.9 -4l-2.7 -6.8l-1.9 -5.4l-1.7 -5.5l-1.4 -5.4l-2.6 -10.8l-0.6 -2.9l-1.3 -7.9l-2.3 -16.2l-1.8 -15.7l-1.6 -22.2l-1.1 -21.6l-0.9 -21.7l-0.7 -27l-0.5 -32.5l-0.4 -32.5l-0.3 -81.1l-0.2 -162.3M616 71l0.3 81.1l0.3 27.1l0.5 27l0.6 21.7l1 21.6l1 16.3l1.4 16.2l0.7 6.9l1.3 9.3l1.7 10.8l2.2 10.9l1.3 5.4l1.6 5.4l2.8 8.4l3.2 7.8l2.7 5.4l3.3 5.4l1.6 2.5l2.2 2.9l3.2 3.9l1.5 1.5l4 3.9l1.8 1.6l3.6 2.8l3.8 2.6l1.6 1l5.4 3l5.4 2.6l5.5 2.1l5.9 2.1l4.9 1.4l5.4 1.4l5.4 1.2l7.1 1.4l9.2 1.5l5.4 0.7l10.9 1.2l16.2 1.3l21.7 1.2l21.7 0.7l21.7 0.5l27.1 0.3l37.9 0.3"/>
<path stroke="#ff8f00" d="M517.2 612l-14.6 -1.8l-10.8 -1.6l-11.2 -2l-10.5 -2.5l-9.9 -2.9l-6.4 -2.4l-6.9 -3l-3.9 -2.1l-5.8 -3.3l-5.1 -3.7l-5.4 -4.6l-5.4 -5.7l-1.8 -2.3l-4 -5.4l-5 -8.4l-3.7 -7.8l-1.8 -4.3l-2.2 -6.5l-3.3 -10.9l-2.4 -10.8l-2.9 -15.8l-1.5 -11.2l-1.2 -10.8l-1.4 -16.3l-1.3 -18.7l-0.9 -19.1l-0.5 -16.3l-0.6 -21.6l-0.5 -27.1l-0.6 -59.5l-0.3 -86.5l-0.1 -146.1M641.1 71l0.2 37.9l0.3 32.4l0.4 27.1l0.6 21.6l0.8 21.7l0.9 16.2l1.2 16.2l1.1 10.8l1.3 10.9l1.7 10.8l2.1 10.8l2.7 10.8l1.7 5.4l1.9 5.4l2.2 5.4l2.6 5.5l2.4 4.4l4.2 6.4l1.2 1.6l3.2 3.8l2.2 2.4l3.1 3l2.4 2.1l5.4 4.1l5.4 3.3l2.3 1.3l3.1 1.6l5.4 2.4l5.5 2.1l5.4 1.7l5.4 1.6l5.4 1.3l5.4 1.2l10.9 1.9l5.4 0.8l10.8 1.3l10.9 1l16.2 1.2l21.7 1l21.7 0.6l27.1 0.5l27.1 0.3"/>
<path stroke="#ff3000" d="M480.3 612l-10.2 -2.4l-10.9 -3l-5.4 -1.9l-5.4 -2.2l-3 -1.3l-2.4 -1.2l-5.4 -3l-5.5 -3.5l-5.4 -4.2l-5.4 -5l-5.4 -6.3l-2.7 -3.9l-3.5 -5.4l-4.7 -8.9l-2.9 -7.3l-2 -5.4l-1.7 -5.4l-2.9 -10.9l-1.3 -5.5l-1 -5.3l-1.8 -10.8l-2.2 -16.2l-1.1 -10.8l-0.9 -10.9l-1.1 -16.2l-0.9 -16.2l-0.8 -21.7l-0.7 -21.6l-0.3 -18.2l-0.4 -25.1l-0.4 -59.5l-0.2 -81.1l-0.1 -140.7M671 71l0.6 54.1l0.5 21.6l0.7 21.7l0.8 16.2l1 16.2l1.4 16.1l1.3 11l1.6 10.8l1 5.4l1.6 7.9l2 8.3l1.6 5.5l1.7 5.4l2.1 5.4l2.4 5.4l2.8 5.4l3.6 5.9l3.7 4.9l1.7 2.1l3.2 3.3l2.3 2.3l3.7 3.1l1.7 1.4l5.4 3.7l5.4 3.1l5.5 2.7l5.4 2.1l5.4 2l5.4 1.6l5.4 1.5l5.4 1.2l10.9 2.1l10.8 1.6l10.9 1.2l16.2 1.4l16.3 0.9l16.2 0.7l21.7 0.7l21.7 0.3"/>
<path stroke="#cf0000" d="M459.9 612l-6.1 -2l-5.4 -2.1l-3.2 -1.3l-7.6 -3.8l-5.5 -3.2l-5.4 -3.8l-6.2 -5.4l-4.6 -4.9l-5.4 -7.1l-2.7 -4.3l-3.2 -5.4l-4.8 -10.8l-2 -5.4l-3.4 -10.8l-1.5 -5.4l-2.2 -10.9l-3 -16.2l-0.6 -5.4l-2.2 -21.6l-2.2 -27.1l-0.8 -16.2l-0.7 -21.7l-0.9 -59.5l-0.4 -59.5l-0.3 -86.5l-0.1 -140.7M708.7 71l0.4 21.6l0.6 21.7l0.7 16.2l0.8 16.2l1.2 16.3l1 10.8l1.3 10.8l1.6 10.8l2 10.8l1.2 5.5l1.5 5.4l1.5 5.4l2.3 6.8l1.6 4l2.4 5.4l2.9 5.4l3.3 5.4l4.1 5.4l2 2.4l2.9 3l2.5 2.5l5.4 4.4l5.4 3.6l5.5 3.1l5.6 2.7l5.2 2l5.4 1.9l5.4 1.7l5.5 1.4l10.8 2.3l10.8 1.8l10.9 1.4l10.8 1.1l16.3 1.2l16.2 0.9l16.3 0.6"/>
<path stroke="#800000" d="M443 612l-5.4 0l-5.5 -5.4l-5.4 0l-21.7 -21.7l0 -5.4l-5.4 -5.4l0 -5.4l-5.4 -5.4l0 -5.4l-5.4 -5.4l0 -16.2l-5.4 -5.5l0 -27l-5.5 -5.4l0 -102.8l-5.4 -5.4l0 -319.2M762.8 71l0 27l5.4 5.5l0 37.8l5.4 5.4l0 16.3l5.4 5.4l0 5.4l5.4 5.4l0 5.4l5.5 5.4l0 5.4l10.8 10.9l5.4 0l5.4 5.4l5.5 0l5.4 5.4l5.4 0l5.4 5.4l21.7 0l5.4 5.4l21.7 0"/>
</g>
<clipPath id="pc"><rect x="340" y="71" width="542" height="541"/></clipPath>
<path d="M422 125.7L426 131.3L429.9 136.8L433.9 142.3L437.8 147.9L441.7 153.5L445.6 159L449.4 164.6L453.2 170.2L457 175.8L460.8 181.4L464.6 187L468.4 192.7L472.1 198.3L475.8 203.9L479.5 209.6L483.2 215.3L486.9 220.9L490.6 226.6L494.3 232.3L498 238L501.6 243.6L505.3 249.3L509 255L512.6 260.8L516.3 266.5L520 272.2L523.7 277.9L527.4 283.7L531 289.4L534.7 295.2L538.3 301L541.8 306.8L545.3 312.7L548.6 318.6L551.8 324.5L554.8 330.6L557.6 336.7L560.3 342.9L562.7 349.2L564.8 355.5L566.7 362L568.3 368.6L569.6 375.3L570.7 382L571.4 388.8L571.9 395.7L572.1 402.5L572 409.4L571.7 416.2L571.1 423L570.3 429.7L569.2 436.3L567.8 442.8L566.2 449.3L564.5 455.7L562.5 462L560.3 468.4L558 474.7L555.6 481.1L553 487.4L550.3 493.8L547.4 500.3L544.4 506.6L541.2 512.8L537.7 518.8L533.9 524.5L529.8 529.8L525.3 534.7L520.4 539L515.1 542.7L509.2 545.8L502.9 548.1L496.3 549.4L489.5 549.6L482.8 548.5L476.2 546.5L469.9 544.1L463.8 541.2L457.8 538L452 534.5L446.3 530.8L440.7 526.9L435.2 522.9L429.7 518.8L424.2 514.7L418.8 510.6L413.3 506.7L407.8 502.9L402.1 499.3L406.1 500.5L410.1 501.8L414.1 503.3L417.9 505L421.8 506.8L425.6 508.6L429.4 510.6L433.2 512.6L436.9 514.6L440.7 516.7L444.5 518.7L448.3 520.7L452.1 522.5L456 524.3L459.9 526L463.8 527.5L467.9 528.8L471.9 530L476.1 530.9L480.3 531.7L484.5 532.2L488.7 532.5L492.9 532.7L497.2 532.6L501.4 532.3L505.6 531.8L509.7 531.1L513.8 530.2L517.8 529L521.8 527.7L525.6 526.1L529.4 524.3L533 522.3L536.6 520L540 517.6L543.4 515L546.7 512.3L550 509.6L553.3 506.7L556.5 503.8L559.8 501L563.1 498.1L566.4 495.3L569.8 492.7L573.3 490.1L576.9 487.7L580.5 485.4L584.2 483.3L588 481.5L591.8 479.8L595.8 478.4L599.7 477.3L603.8 476.4L607.9 475.9L612.1 475.6L616.3 475.6L620.5 476L624.7 476.5L628.9 477.4L633 478.4L637.1 479.7L641.1 481.3L644.9 483L648.8 484.8L652.5 486.9L656.2 489.1L659.8 491.4L663.3 493.8L666.8 496.3L670.2 498.8L673.6 501.5L677 504.1L680.3 506.8L683.5 509.5L686.8 512.2L690 515L693.2 517.7L696.4 520.5L699.5 523.3L702.7 526L705.8 528.8L708.9 531.6L712 534.4L715.1 537.2L718.3 540.1L721.4 542.9L724.5 545.7L727.6 548.6L730.7 551.4L733.9 554.2L737.1 557.1L740.2 559.9L743.4 562.7L746.7 565.5L749.9 568.4L753.2 571.2L756.6 574L759.9 576.8L763.4 579.6L766.8 582.4L770.3 585L773.9 587.3L777.5 589L781.3 589.9L785.1 589.7L788.7 588.5L791.9 586.2L794.6 583L796.6 579.2L798.2 575L799.1 570.7L799.6 566.3L799.8 562L799.9 557.6L800 553.4L800.1 549.1L800.2 544.9L800.4 540.8L800.6 536.6L800.9 532.4L801.3 528.3L801.7 524.1L802.3 519.9L803 515.7L803.9 511.5L804.9 507.2L806 502.9L807.5 498.8L809.3 494.9L811.5 491.4L814.2 488.3L817.5 485.8L821.2 483.9L825.3 482.7L829.4 482.2L833.5 482.5L837.6 483.3L841.7 484.6L845.7 486.2L849.7 488.2L853.5 490.4L857.2 492.7L860.8 494.9L864.3 497.2L867.7 499.5L871.1 501.7L874.6 504L878.2 506.3L881.9 508.7" fill="none" stroke="#000" stroke-width="5.1" stroke-linejoin="round" stroke-linecap="butt" shape-rendering="crispEdges" clip-path="url(#pc)"/>
</svg>

<!-- tick labels -->
<div class="tk r" style="top:65px">2.5</div>
<div class="tk r" style="top:200px">2</div>
<div class="tk r" style="top:335px">1.5</div>
<div class="tk r" style="top:470px">1</div>
<div class="tk r" style="top:606px">0.5</div>
<div class="tk c" style="left:340px;top:619px">0.5</div>
<div class="tk c" style="left:475.5px;top:619px">1</div>
<div class="tk c" style="left:611px;top:619px">1.5</div>
<div class="tk c" style="left:746.5px;top:619px">2</div>
<div class="tk c" style="left:881.5px;top:619px">2.5</div>
<div class="lb" style="left:611px;top:635px;transform:translateX(-50%)">A-B bond distance (Å)</div>
<div class="lb" style="left:302px;top:340.5px;transform:translate(-50%,-50%) rotate(-90deg)">B-C bond distance (Å)</div>
</body></html>
